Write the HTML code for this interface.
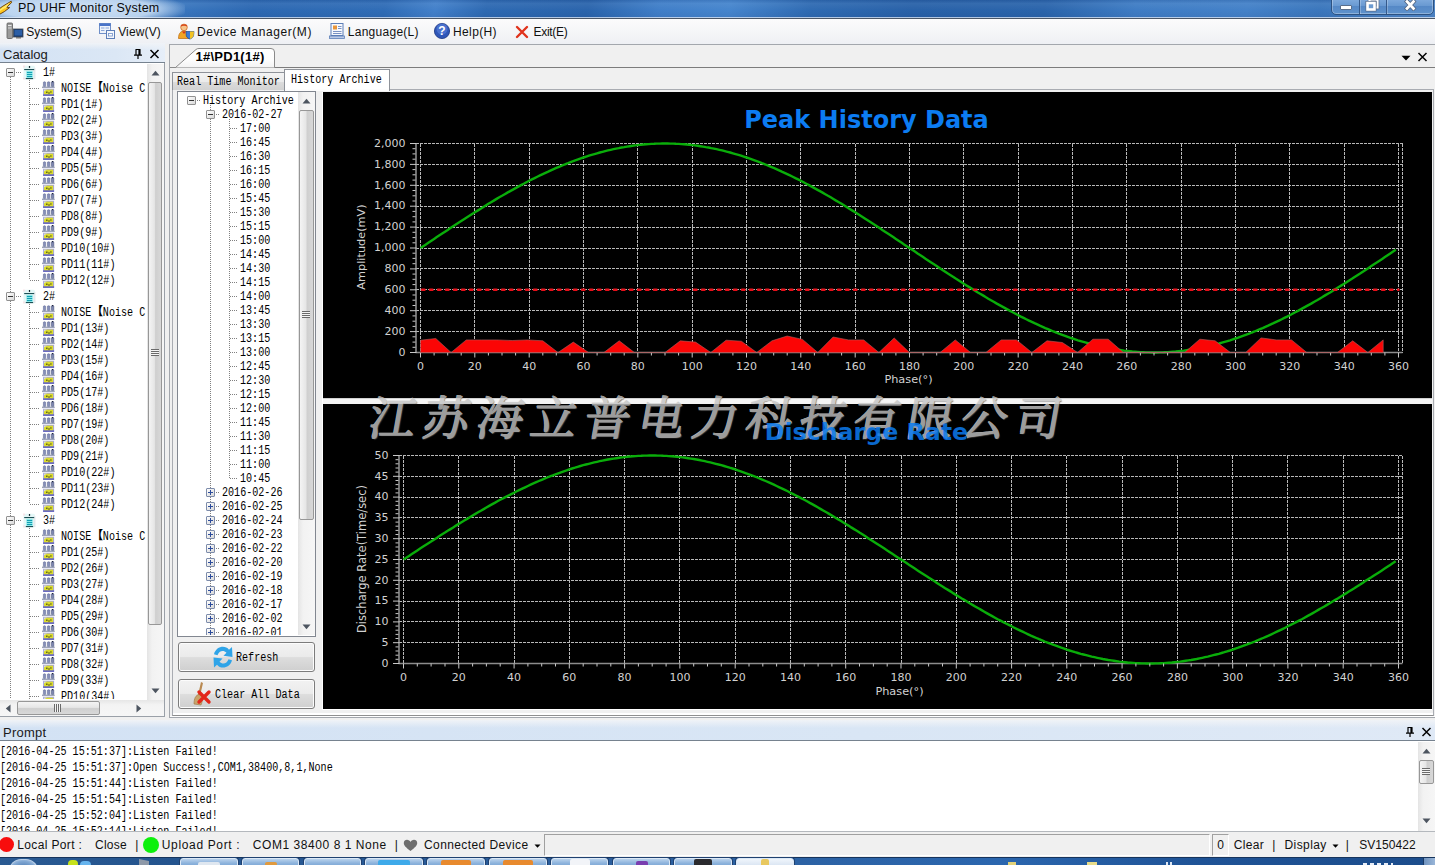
<!DOCTYPE html>
<html><head><meta charset="utf-8"><title>PD UHF Monitor System</title>
<style>
html,body{margin:0;padding:0}
body{width:1435px;height:865px;overflow:hidden;background:#f0f0f0;position:relative;font-family:"Liberation Sans",sans-serif;font-size:12px;color:#000}
.abs,.abs *{position:absolute}
div{box-sizing:border-box}
.ui{font-family:"Liberation Sans",sans-serif;font-size:12px;white-space:nowrap;line-height:14px}
.sim{font-family:"Liberation Mono","Noto Serif CJK SC",monospace;font-size:12px;letter-spacing:0;white-space:pre;line-height:14px;color:#000;transform:scaleX(.84);transform-origin:0 0}
.row{position:absolute;left:0;height:16px;width:147px}
.row .t{position:absolute;top:1.5px}
.hl{position:absolute;height:1px;background-image:linear-gradient(90deg,#808080 50%,transparent 50%);background-size:2px 1px}
.vl{position:absolute;width:1px;background-image:linear-gradient(180deg,#808080 50%,transparent 50%);background-size:1px 2px}
.box{position:absolute;width:9px;height:9px;border:1px solid #919191;background:linear-gradient(135deg,#fff,#d8d8d8);border-radius:1px}
.box:before{content:"";position:absolute;left:1px;top:3px;width:5px;height:1px;background:#333}
.box.plus{border-color:#7d8cab}.box.plus:before{background:#2c4c9c}.box.plus:after{content:"";position:absolute;left:3px;top:1px;width:1px;height:5px;background:#2c4c9c}
.chart text{font-family:"DejaVu Sans","Liberation Sans",sans-serif;font-size:11px;fill:#d2d2d2}
</style></head><body>

<div style="position:absolute;left:0;top:0;width:1435px;height:18px;background:linear-gradient(100deg,#5a90cf 0,#3b78c0 170px,#2c68b2 250px,#2f6cb6 380px,#4280ca 430px,#2d69b2 480px,#2a64ac 580px,#3f7ec8 650px,#4585cd 720px,#2e6ab2 800px,#2861a8 900px,#2a64ab 1030px,#3e7cc4 1120px,#4381c8 1230px,#3a76bc 1300px,#4a82c4 1380px,#4f86c6 1435px)"></div>
<div style="position:absolute;left:0;top:0;width:1435px;height:18px;background:linear-gradient(180deg,rgba(0,0,40,.08),rgba(255,255,255,.06) 20%,rgba(255,255,255,0) 60%,rgba(0,0,40,.06))"></div>
<div style="position:absolute;left:-30px;top:-8px;width:215px;height:34px;background:radial-gradient(ellipse at center,rgba(214,230,247,.95) 0,rgba(205,225,246,.85) 50%,rgba(195,218,243,0) 74%)"></div>
<div style="position:absolute;left:0;top:16.6px;width:1435px;height:1.2px;background:rgba(225,235,248,.75)"></div>
<div style="position:absolute;left:0;top:17.8px;width:1435px;height:1.2px;background:#4a5666"></div>
<svg style="position:absolute;left:0;top:0" width="14" height="16" viewBox="0 0 14 16"><defs><linearGradient id="lg" x1="0" y1="0" x2="1" y2="1"><stop offset="0" stop-color="#ffe03a"/><stop offset=".55" stop-color="#ffc21a"/><stop offset="1" stop-color="#ee7a10"/></linearGradient></defs><path d="M11.2 1.2 L2.2 6.6 L-1 9 L-1 14.6 L4.4 11.6 L9.6 7.6 L6.6 7.2 L11.6 2.6 Z" fill="url(#lg)" stroke="#5e3608" stroke-width=".9" stroke-linejoin="round"/><path d="M9.5 2.8 L2.5 7.4 L0 9.4 L0 11 L4 8.6 L6 8.2 Z" fill="#fff27a" opacity=".8"/></svg>
<div class="ui" style="position:absolute;left:18px;top:1px;font-size:12.5px;letter-spacing:.22px;color:#0a0a0a">PD UHF Monitor System</div>

<div style="position:absolute;left:1331px;top:-4px;width:103px;height:19px;border:1px solid #2d5282;border-radius:0 0 5px 5px;background:linear-gradient(180deg,#86afe0,#6a9ad2 50%,#5588c6 52%,#5f92cc);box-shadow:inset 0 0 0 1px rgba(255,255,255,.3)"></div>
<div style="position:absolute;left:1359px;top:0;width:1px;height:14px;background:#35598a"></div><div style="position:absolute;left:1360px;top:0;width:1px;height:14px;background:rgba(255,255,255,.25)"></div>
<div style="position:absolute;left:1386px;top:0;width:1px;height:14px;background:#35598a"></div><div style="position:absolute;left:1387px;top:0;width:1px;height:14px;background:rgba(255,255,255,.25)"></div>
<div style="position:absolute;left:1340px;top:5px;width:12px;height:5px;background:#fff;border:1px solid #5a6e8a;border-radius:1px"></div>
<svg style="position:absolute;left:1364px;top:-2px" width="16" height="14" viewBox="0 0 16 14"><rect x="5.5" y="1.5" width="8" height="8" fill="none" stroke="#566a88" stroke-width="3.6"/><rect x="5.5" y="1.5" width="8" height="8" fill="none" stroke="#fff" stroke-width="2.2"/><rect x="3.5" y="5" width="7" height="6.5" fill="#5d8fc8" stroke="#566a88" stroke-width="4"/><rect x="3.5" y="5" width="7" height="6.5" fill="#6d9bd0" stroke="#fff" stroke-width="2.6"/></svg>
<svg style="position:absolute;left:1403px;top:-1px" width="15" height="12" viewBox="0 0 15 12"><path d="M4 2.5 L10.5 9.5 M10.5 2.5 L4 9.5" stroke="#50627e" stroke-width="4.2" stroke-linecap="square"/><path d="M4 2.5 L10.5 9.5 M10.5 2.5 L4 9.5" stroke="#fff" stroke-width="2.7" stroke-linecap="square"/></svg>

<div style="position:absolute;left:0;top:19px;width:1435px;height:25px;background:linear-gradient(180deg,#fbfbfc,#f4f5f7 60%,#eef0f4)"></div>


<div class="ui" style="position:absolute;left:26.3px;top:24.8px;letter-spacing:-0.057px;color:#111">System(S)</div>
<div class="ui" style="position:absolute;left:118.2px;top:24.8px;letter-spacing:0.143px;color:#111">View(V)</div>
<div class="ui" style="position:absolute;left:197px;top:24.8px;letter-spacing:0.566px;color:#111">Device Manager(M)</div>
<div class="ui" style="position:absolute;left:347.8px;top:24.8px;letter-spacing:0.267px;color:#111">Language(L)</div>
<div class="ui" style="position:absolute;left:453px;top:24.8px;letter-spacing:0.379px;color:#111">Help(H)</div>
<div class="ui" style="position:absolute;left:533.4px;top:24.8px;letter-spacing:-0.257px;color:#111">Exit(E)</div>
<svg style="position:absolute;left:6px;top:22px" width="18" height="18" viewBox="0 0 18 18"><rect x="1" y="1" width="5.5" height="15.5" rx="1" fill="#9a9a9a" stroke="#5a5a5a" stroke-width=".8"/><rect x="2" y="3" width="3.5" height="1" fill="#e8e8e8"/><rect x="2" y="5.5" width="3.5" height="1" fill="#d8d8d8"/><rect x="7.5" y="7" width="9.5" height="8" fill="#16386c" stroke="#404a58" stroke-width=".8"/><rect x="8.5" y="8" width="7.5" height="5.5" fill="#2b5ea6"/><rect x="10" y="15" width="5" height="1.5" fill="#777"/></svg>
<svg style="position:absolute;left:98px;top:22px" width="18" height="18" viewBox="0 0 18 18"><rect x="1.5" y="1.5" width="11" height="10" fill="#eef3fb" stroke="#6f8fc8"/><rect x="1.5" y="1.5" width="11" height="2.5" fill="#4a74c8"/><rect x="3" y="5.5" width="3.5" height="1" fill="#8aa6d8"/><rect x="7.5" y="5.5" width="3.5" height="1" fill="#8aa6d8"/><rect x="3" y="8" width="3.5" height="1" fill="#8aa6d8"/><rect x="8.5" y="8.5" width="8" height="8" fill="#f4f7fc" stroke="#5d7fb8"/><rect x="10.5" y="11.5" width="4" height="2.5" fill="#fff" stroke="#6f8fc8" stroke-width=".8"/></svg>
<svg style="position:absolute;left:177px;top:22px" width="18" height="18" viewBox="0 0 18 18"><circle cx="7" cy="5.4" r="3.3" fill="#f6c48a" stroke="#c8641c" stroke-width=".7"/><path d="M3.6 4.6 C3.6 1.6 10.4 1.6 10.4 4.6 C8.5 3.4 5.5 3.4 3.6 4.6Z" fill="#d8481c"/><path d="M1.5 16.5 C1.5 11 4 9 7 9 C10 9 12.5 11 12.5 16.5Z" fill="#f2a424" stroke="#b8680e" stroke-width=".7"/><path d="M5 9.4 L7 12 L9 9.4Z" fill="#d8361c"/><path d="M9 9.5 L17 9.5 L16.5 14 C15.5 16 13.5 16.8 13 17 C12.2 16.8 10 16 9.3 14Z" fill="#3b7bd6" stroke="#1d4a94" stroke-width=".7"/><path d="M13 9.5 L17 9.5 L16.5 14 C15.5 16 13.5 16.8 13 17Z" fill="#f3c324"/></svg>
<svg style="position:absolute;left:328px;top:22px" width="18" height="18" viewBox="0 0 18 18"><rect x="3" y="1.5" width="12" height="12" fill="#f7f9fd" stroke="#5d7fb8"/><rect x="5" y="3.5" width="4" height="4" fill="#e8953a"/><rect x="10" y="4" width="3.5" height="1" fill="#7a93c4"/><rect x="10" y="6" width="3.5" height="1" fill="#7a93c4"/><rect x="5" y="9" width="8.5" height="1" fill="#7a93c4"/><rect x="5" y="11" width="8.5" height="1" fill="#7a93c4"/><rect x="1.5" y="14" width="15" height="2.5" fill="#b9c9e6" stroke="#5d7fb8" stroke-width=".8"/></svg>
<svg style="position:absolute;left:433px;top:22px" width="18" height="18" viewBox="0 0 18 18"><circle cx="9" cy="9" r="7.6" fill="#2f56b8" stroke="#1b3580" stroke-width=".8"/><circle cx="9" cy="7" r="5.5" fill="#5f86e0" opacity=".55"/><text x="9" y="13.2" text-anchor="middle" font-family="Liberation Sans,sans-serif" font-weight="bold" font-size="12" fill="#fff">?</text></svg>
<svg style="position:absolute;left:515px;top:25px" width="14" height="14" viewBox="0 0 14 14"><path d="M2 2 L12 12 M12 2 L2 12" stroke="#e0331c" stroke-width="2.4" stroke-linecap="round"/></svg>

<div style="position:absolute;left:0;top:43px;width:165px;height:20px;background:linear-gradient(180deg,rgba(240,243,247,1) 0,rgba(240,243,247,0) 35%),linear-gradient(90deg,#d3e2f4,#dbe7f5 70%,#e6eef8);border-bottom:1px solid #76828f"></div>
<div class="ui" style="position:absolute;left:3px;top:47.8px;font-size:13px;color:#1a1a1a">Catalog</div>
<svg style="position:absolute;left:133px;top:48px" width="10" height="12" viewBox="0 0 10 12"><path d="M2.5 1.5 H7.5 M3 1.5 V7 M7 1.5 V7 M6 1.5 V7 M1 7.2 H9 M5 7.5 V11" stroke="#000" stroke-width="1.2" fill="none"/></svg>
<svg style="position:absolute;left:149px;top:49px" width="11" height="10" viewBox="0 0 11 10"><path d="M1.5 1 L9.5 9 M9.5 1 L1.5 9" stroke="#000" stroke-width="1.5"/></svg>
<div style="position:absolute;left:0;top:63px;width:165px;height:654px;background:#fff;border-right:1px solid #9aa0a8;border-bottom:1px solid #9aa0a8"></div>

<div id="cat" style="position:absolute;left:0;top:64px;width:147px;height:635px;overflow:hidden">
<div class="vl" style="left:10px;top:13px;height:640px"></div>
<div class="row" style="top:0px"><div class="box" style="left:6px;top:4px"></div><div class="hl" style="left:16px;top:8px;width:6px"></div><svg style="position:absolute;left:23px;top:1px" width="13" height="15" viewBox="0 0 13 15"><rect x="0.5" y="0.8" width="11.5" height="13.6" rx="1.5" fill="#e4f7f7"/><rect x="0" y="0.5" width="2" height="2" fill="#f9dde4" opacity=".8"/><rect x="0" y="12.5" width="2" height="2" fill="#f9dde4" opacity=".8"/><rect x="10.5" y="3" width="2" height="11" fill="#e3e6ea" opacity=".8"/><rect x="5.9" y="1" width="1.2" height="1.9" fill="#10222a"/><rect x="1.2" y="4" width="10" height="1.1" fill="#1d4f55"/><rect x="3.4" y="5.8" width="6.2" height="7.2" fill="#8ceaea"/><rect x="3.9" y="7" width="5.3" height="1" fill="#149eb2"/><rect x="3.9" y="9" width="5.3" height="1" fill="#149eb2"/><rect x="3.9" y="11" width="5.3" height="1" fill="#149eb2"/><rect x="2.8" y="13" width="7.3" height="1.1" fill="#1d4f55"/></svg><span class="sim t" style="left:42.5px">1#</span></div>
<div class="vl" style="left:29px;top:16px;height:200px"></div>
<div class="row" style="top:16px"><div class="hl" style="left:30px;top:8px;width:10px"></div><svg style="position:absolute;left:42px;top:1px" width="13" height="15" viewBox="0 0 13 15"><rect x="1.4" y="0.8" width="2.2" height="4.9" rx=".8" fill="#8590ba" stroke="#59618e" stroke-width=".5"/><rect x="5.4" y="0.8" width="2.4" height="4.9" rx=".8" fill="#8590ba" stroke="#59618e" stroke-width=".5"/><rect x="9.4" y="0.6" width="2.4" height="5.1" rx=".8" fill="#7d87b0" stroke="#3f4670" stroke-width=".5"/><rect x="10" y="0" width="1.2" height="1.2" fill="#20243a"/><rect x="0" y="5.6" width="12.7" height="1.3" fill="#8b93ad"/><rect x="0.6" y="6.9" width="11.6" height="1.2" fill="#e6e6f4"/><rect x="1.1" y="8" width="11" height="6.8" fill="#a3a3e4"/><rect x="2" y="8.6" width="9.2" height="5" fill="#dcdc30"/><path d="M2 8.6 L5 8.6 L2 10.6Z" fill="#d6d8e0"/><rect x="1.1" y="13.4" width="11" height="1.4" fill="#5a5ab8"/><rect x="4.2" y="10.6" width="1.3" height="1.2" fill="#2a3010"/><rect x="6.4" y="11.4" width="1.2" height="1.2" fill="#2a3010"/><rect x="8.3" y="10.4" width="1.2" height="1.2" fill="#3a4216"/></svg><span class="sim t" style="left:60.5px">NOISE<span style="font-family:'Noto Sans CJK SC',sans-serif;font-weight:700;font-size:12px;line-height:0;letter-spacing:0;display:inline-block;transform:scaleX(1.19);transform-origin:0 50%;margin-left:-0.5px;margin-right:2.3px">【</span>Noise C:</span></div>
<div class="row" style="top:32px"><div class="hl" style="left:30px;top:8px;width:10px"></div><svg style="position:absolute;left:42px;top:1px" width="13" height="15" viewBox="0 0 13 15"><rect x="1.4" y="0.8" width="2.2" height="4.9" rx=".8" fill="#8590ba" stroke="#59618e" stroke-width=".5"/><rect x="5.4" y="0.8" width="2.4" height="4.9" rx=".8" fill="#8590ba" stroke="#59618e" stroke-width=".5"/><rect x="9.4" y="0.6" width="2.4" height="5.1" rx=".8" fill="#7d87b0" stroke="#3f4670" stroke-width=".5"/><rect x="10" y="0" width="1.2" height="1.2" fill="#20243a"/><rect x="0" y="5.6" width="12.7" height="1.3" fill="#8b93ad"/><rect x="0.6" y="6.9" width="11.6" height="1.2" fill="#e6e6f4"/><rect x="1.1" y="8" width="11" height="6.8" fill="#a3a3e4"/><rect x="2" y="8.6" width="9.2" height="5" fill="#dcdc30"/><path d="M2 8.6 L5 8.6 L2 10.6Z" fill="#d6d8e0"/><rect x="1.1" y="13.4" width="11" height="1.4" fill="#5a5ab8"/><rect x="4.2" y="10.6" width="1.3" height="1.2" fill="#2a3010"/><rect x="6.4" y="11.4" width="1.2" height="1.2" fill="#2a3010"/><rect x="8.3" y="10.4" width="1.2" height="1.2" fill="#3a4216"/></svg><span class="sim t" style="left:60.5px">PD1(1#)</span></div>
<div class="row" style="top:48px"><div class="hl" style="left:30px;top:8px;width:10px"></div><svg style="position:absolute;left:42px;top:1px" width="13" height="15" viewBox="0 0 13 15"><rect x="1.4" y="0.8" width="2.2" height="4.9" rx=".8" fill="#8590ba" stroke="#59618e" stroke-width=".5"/><rect x="5.4" y="0.8" width="2.4" height="4.9" rx=".8" fill="#8590ba" stroke="#59618e" stroke-width=".5"/><rect x="9.4" y="0.6" width="2.4" height="5.1" rx=".8" fill="#7d87b0" stroke="#3f4670" stroke-width=".5"/><rect x="10" y="0" width="1.2" height="1.2" fill="#20243a"/><rect x="0" y="5.6" width="12.7" height="1.3" fill="#8b93ad"/><rect x="0.6" y="6.9" width="11.6" height="1.2" fill="#e6e6f4"/><rect x="1.1" y="8" width="11" height="6.8" fill="#a3a3e4"/><rect x="2" y="8.6" width="9.2" height="5" fill="#dcdc30"/><path d="M2 8.6 L5 8.6 L2 10.6Z" fill="#d6d8e0"/><rect x="1.1" y="13.4" width="11" height="1.4" fill="#5a5ab8"/><rect x="4.2" y="10.6" width="1.3" height="1.2" fill="#2a3010"/><rect x="6.4" y="11.4" width="1.2" height="1.2" fill="#2a3010"/><rect x="8.3" y="10.4" width="1.2" height="1.2" fill="#3a4216"/></svg><span class="sim t" style="left:60.5px">PD2(2#)</span></div>
<div class="row" style="top:64px"><div class="hl" style="left:30px;top:8px;width:10px"></div><svg style="position:absolute;left:42px;top:1px" width="13" height="15" viewBox="0 0 13 15"><rect x="1.4" y="0.8" width="2.2" height="4.9" rx=".8" fill="#8590ba" stroke="#59618e" stroke-width=".5"/><rect x="5.4" y="0.8" width="2.4" height="4.9" rx=".8" fill="#8590ba" stroke="#59618e" stroke-width=".5"/><rect x="9.4" y="0.6" width="2.4" height="5.1" rx=".8" fill="#7d87b0" stroke="#3f4670" stroke-width=".5"/><rect x="10" y="0" width="1.2" height="1.2" fill="#20243a"/><rect x="0" y="5.6" width="12.7" height="1.3" fill="#8b93ad"/><rect x="0.6" y="6.9" width="11.6" height="1.2" fill="#e6e6f4"/><rect x="1.1" y="8" width="11" height="6.8" fill="#a3a3e4"/><rect x="2" y="8.6" width="9.2" height="5" fill="#dcdc30"/><path d="M2 8.6 L5 8.6 L2 10.6Z" fill="#d6d8e0"/><rect x="1.1" y="13.4" width="11" height="1.4" fill="#5a5ab8"/><rect x="4.2" y="10.6" width="1.3" height="1.2" fill="#2a3010"/><rect x="6.4" y="11.4" width="1.2" height="1.2" fill="#2a3010"/><rect x="8.3" y="10.4" width="1.2" height="1.2" fill="#3a4216"/></svg><span class="sim t" style="left:60.5px">PD3(3#)</span></div>
<div class="row" style="top:80px"><div class="hl" style="left:30px;top:8px;width:10px"></div><svg style="position:absolute;left:42px;top:1px" width="13" height="15" viewBox="0 0 13 15"><rect x="1.4" y="0.8" width="2.2" height="4.9" rx=".8" fill="#8590ba" stroke="#59618e" stroke-width=".5"/><rect x="5.4" y="0.8" width="2.4" height="4.9" rx=".8" fill="#8590ba" stroke="#59618e" stroke-width=".5"/><rect x="9.4" y="0.6" width="2.4" height="5.1" rx=".8" fill="#7d87b0" stroke="#3f4670" stroke-width=".5"/><rect x="10" y="0" width="1.2" height="1.2" fill="#20243a"/><rect x="0" y="5.6" width="12.7" height="1.3" fill="#8b93ad"/><rect x="0.6" y="6.9" width="11.6" height="1.2" fill="#e6e6f4"/><rect x="1.1" y="8" width="11" height="6.8" fill="#a3a3e4"/><rect x="2" y="8.6" width="9.2" height="5" fill="#dcdc30"/><path d="M2 8.6 L5 8.6 L2 10.6Z" fill="#d6d8e0"/><rect x="1.1" y="13.4" width="11" height="1.4" fill="#5a5ab8"/><rect x="4.2" y="10.6" width="1.3" height="1.2" fill="#2a3010"/><rect x="6.4" y="11.4" width="1.2" height="1.2" fill="#2a3010"/><rect x="8.3" y="10.4" width="1.2" height="1.2" fill="#3a4216"/></svg><span class="sim t" style="left:60.5px">PD4(4#)</span></div>
<div class="row" style="top:96px"><div class="hl" style="left:30px;top:8px;width:10px"></div><svg style="position:absolute;left:42px;top:1px" width="13" height="15" viewBox="0 0 13 15"><rect x="1.4" y="0.8" width="2.2" height="4.9" rx=".8" fill="#8590ba" stroke="#59618e" stroke-width=".5"/><rect x="5.4" y="0.8" width="2.4" height="4.9" rx=".8" fill="#8590ba" stroke="#59618e" stroke-width=".5"/><rect x="9.4" y="0.6" width="2.4" height="5.1" rx=".8" fill="#7d87b0" stroke="#3f4670" stroke-width=".5"/><rect x="10" y="0" width="1.2" height="1.2" fill="#20243a"/><rect x="0" y="5.6" width="12.7" height="1.3" fill="#8b93ad"/><rect x="0.6" y="6.9" width="11.6" height="1.2" fill="#e6e6f4"/><rect x="1.1" y="8" width="11" height="6.8" fill="#a3a3e4"/><rect x="2" y="8.6" width="9.2" height="5" fill="#dcdc30"/><path d="M2 8.6 L5 8.6 L2 10.6Z" fill="#d6d8e0"/><rect x="1.1" y="13.4" width="11" height="1.4" fill="#5a5ab8"/><rect x="4.2" y="10.6" width="1.3" height="1.2" fill="#2a3010"/><rect x="6.4" y="11.4" width="1.2" height="1.2" fill="#2a3010"/><rect x="8.3" y="10.4" width="1.2" height="1.2" fill="#3a4216"/></svg><span class="sim t" style="left:60.5px">PD5(5#)</span></div>
<div class="row" style="top:112px"><div class="hl" style="left:30px;top:8px;width:10px"></div><svg style="position:absolute;left:42px;top:1px" width="13" height="15" viewBox="0 0 13 15"><rect x="1.4" y="0.8" width="2.2" height="4.9" rx=".8" fill="#8590ba" stroke="#59618e" stroke-width=".5"/><rect x="5.4" y="0.8" width="2.4" height="4.9" rx=".8" fill="#8590ba" stroke="#59618e" stroke-width=".5"/><rect x="9.4" y="0.6" width="2.4" height="5.1" rx=".8" fill="#7d87b0" stroke="#3f4670" stroke-width=".5"/><rect x="10" y="0" width="1.2" height="1.2" fill="#20243a"/><rect x="0" y="5.6" width="12.7" height="1.3" fill="#8b93ad"/><rect x="0.6" y="6.9" width="11.6" height="1.2" fill="#e6e6f4"/><rect x="1.1" y="8" width="11" height="6.8" fill="#a3a3e4"/><rect x="2" y="8.6" width="9.2" height="5" fill="#dcdc30"/><path d="M2 8.6 L5 8.6 L2 10.6Z" fill="#d6d8e0"/><rect x="1.1" y="13.4" width="11" height="1.4" fill="#5a5ab8"/><rect x="4.2" y="10.6" width="1.3" height="1.2" fill="#2a3010"/><rect x="6.4" y="11.4" width="1.2" height="1.2" fill="#2a3010"/><rect x="8.3" y="10.4" width="1.2" height="1.2" fill="#3a4216"/></svg><span class="sim t" style="left:60.5px">PD6(6#)</span></div>
<div class="row" style="top:128px"><div class="hl" style="left:30px;top:8px;width:10px"></div><svg style="position:absolute;left:42px;top:1px" width="13" height="15" viewBox="0 0 13 15"><rect x="1.4" y="0.8" width="2.2" height="4.9" rx=".8" fill="#8590ba" stroke="#59618e" stroke-width=".5"/><rect x="5.4" y="0.8" width="2.4" height="4.9" rx=".8" fill="#8590ba" stroke="#59618e" stroke-width=".5"/><rect x="9.4" y="0.6" width="2.4" height="5.1" rx=".8" fill="#7d87b0" stroke="#3f4670" stroke-width=".5"/><rect x="10" y="0" width="1.2" height="1.2" fill="#20243a"/><rect x="0" y="5.6" width="12.7" height="1.3" fill="#8b93ad"/><rect x="0.6" y="6.9" width="11.6" height="1.2" fill="#e6e6f4"/><rect x="1.1" y="8" width="11" height="6.8" fill="#a3a3e4"/><rect x="2" y="8.6" width="9.2" height="5" fill="#dcdc30"/><path d="M2 8.6 L5 8.6 L2 10.6Z" fill="#d6d8e0"/><rect x="1.1" y="13.4" width="11" height="1.4" fill="#5a5ab8"/><rect x="4.2" y="10.6" width="1.3" height="1.2" fill="#2a3010"/><rect x="6.4" y="11.4" width="1.2" height="1.2" fill="#2a3010"/><rect x="8.3" y="10.4" width="1.2" height="1.2" fill="#3a4216"/></svg><span class="sim t" style="left:60.5px">PD7(7#)</span></div>
<div class="row" style="top:144px"><div class="hl" style="left:30px;top:8px;width:10px"></div><svg style="position:absolute;left:42px;top:1px" width="13" height="15" viewBox="0 0 13 15"><rect x="1.4" y="0.8" width="2.2" height="4.9" rx=".8" fill="#8590ba" stroke="#59618e" stroke-width=".5"/><rect x="5.4" y="0.8" width="2.4" height="4.9" rx=".8" fill="#8590ba" stroke="#59618e" stroke-width=".5"/><rect x="9.4" y="0.6" width="2.4" height="5.1" rx=".8" fill="#7d87b0" stroke="#3f4670" stroke-width=".5"/><rect x="10" y="0" width="1.2" height="1.2" fill="#20243a"/><rect x="0" y="5.6" width="12.7" height="1.3" fill="#8b93ad"/><rect x="0.6" y="6.9" width="11.6" height="1.2" fill="#e6e6f4"/><rect x="1.1" y="8" width="11" height="6.8" fill="#a3a3e4"/><rect x="2" y="8.6" width="9.2" height="5" fill="#dcdc30"/><path d="M2 8.6 L5 8.6 L2 10.6Z" fill="#d6d8e0"/><rect x="1.1" y="13.4" width="11" height="1.4" fill="#5a5ab8"/><rect x="4.2" y="10.6" width="1.3" height="1.2" fill="#2a3010"/><rect x="6.4" y="11.4" width="1.2" height="1.2" fill="#2a3010"/><rect x="8.3" y="10.4" width="1.2" height="1.2" fill="#3a4216"/></svg><span class="sim t" style="left:60.5px">PD8(8#)</span></div>
<div class="row" style="top:160px"><div class="hl" style="left:30px;top:8px;width:10px"></div><svg style="position:absolute;left:42px;top:1px" width="13" height="15" viewBox="0 0 13 15"><rect x="1.4" y="0.8" width="2.2" height="4.9" rx=".8" fill="#8590ba" stroke="#59618e" stroke-width=".5"/><rect x="5.4" y="0.8" width="2.4" height="4.9" rx=".8" fill="#8590ba" stroke="#59618e" stroke-width=".5"/><rect x="9.4" y="0.6" width="2.4" height="5.1" rx=".8" fill="#7d87b0" stroke="#3f4670" stroke-width=".5"/><rect x="10" y="0" width="1.2" height="1.2" fill="#20243a"/><rect x="0" y="5.6" width="12.7" height="1.3" fill="#8b93ad"/><rect x="0.6" y="6.9" width="11.6" height="1.2" fill="#e6e6f4"/><rect x="1.1" y="8" width="11" height="6.8" fill="#a3a3e4"/><rect x="2" y="8.6" width="9.2" height="5" fill="#dcdc30"/><path d="M2 8.6 L5 8.6 L2 10.6Z" fill="#d6d8e0"/><rect x="1.1" y="13.4" width="11" height="1.4" fill="#5a5ab8"/><rect x="4.2" y="10.6" width="1.3" height="1.2" fill="#2a3010"/><rect x="6.4" y="11.4" width="1.2" height="1.2" fill="#2a3010"/><rect x="8.3" y="10.4" width="1.2" height="1.2" fill="#3a4216"/></svg><span class="sim t" style="left:60.5px">PD9(9#)</span></div>
<div class="row" style="top:176px"><div class="hl" style="left:30px;top:8px;width:10px"></div><svg style="position:absolute;left:42px;top:1px" width="13" height="15" viewBox="0 0 13 15"><rect x="1.4" y="0.8" width="2.2" height="4.9" rx=".8" fill="#8590ba" stroke="#59618e" stroke-width=".5"/><rect x="5.4" y="0.8" width="2.4" height="4.9" rx=".8" fill="#8590ba" stroke="#59618e" stroke-width=".5"/><rect x="9.4" y="0.6" width="2.4" height="5.1" rx=".8" fill="#7d87b0" stroke="#3f4670" stroke-width=".5"/><rect x="10" y="0" width="1.2" height="1.2" fill="#20243a"/><rect x="0" y="5.6" width="12.7" height="1.3" fill="#8b93ad"/><rect x="0.6" y="6.9" width="11.6" height="1.2" fill="#e6e6f4"/><rect x="1.1" y="8" width="11" height="6.8" fill="#a3a3e4"/><rect x="2" y="8.6" width="9.2" height="5" fill="#dcdc30"/><path d="M2 8.6 L5 8.6 L2 10.6Z" fill="#d6d8e0"/><rect x="1.1" y="13.4" width="11" height="1.4" fill="#5a5ab8"/><rect x="4.2" y="10.6" width="1.3" height="1.2" fill="#2a3010"/><rect x="6.4" y="11.4" width="1.2" height="1.2" fill="#2a3010"/><rect x="8.3" y="10.4" width="1.2" height="1.2" fill="#3a4216"/></svg><span class="sim t" style="left:60.5px">PD10(10#)</span></div>
<div class="row" style="top:192px"><div class="hl" style="left:30px;top:8px;width:10px"></div><svg style="position:absolute;left:42px;top:1px" width="13" height="15" viewBox="0 0 13 15"><rect x="1.4" y="0.8" width="2.2" height="4.9" rx=".8" fill="#8590ba" stroke="#59618e" stroke-width=".5"/><rect x="5.4" y="0.8" width="2.4" height="4.9" rx=".8" fill="#8590ba" stroke="#59618e" stroke-width=".5"/><rect x="9.4" y="0.6" width="2.4" height="5.1" rx=".8" fill="#7d87b0" stroke="#3f4670" stroke-width=".5"/><rect x="10" y="0" width="1.2" height="1.2" fill="#20243a"/><rect x="0" y="5.6" width="12.7" height="1.3" fill="#8b93ad"/><rect x="0.6" y="6.9" width="11.6" height="1.2" fill="#e6e6f4"/><rect x="1.1" y="8" width="11" height="6.8" fill="#a3a3e4"/><rect x="2" y="8.6" width="9.2" height="5" fill="#dcdc30"/><path d="M2 8.6 L5 8.6 L2 10.6Z" fill="#d6d8e0"/><rect x="1.1" y="13.4" width="11" height="1.4" fill="#5a5ab8"/><rect x="4.2" y="10.6" width="1.3" height="1.2" fill="#2a3010"/><rect x="6.4" y="11.4" width="1.2" height="1.2" fill="#2a3010"/><rect x="8.3" y="10.4" width="1.2" height="1.2" fill="#3a4216"/></svg><span class="sim t" style="left:60.5px">PD11(11#)</span></div>
<div class="row" style="top:208px"><div class="hl" style="left:30px;top:8px;width:10px"></div><svg style="position:absolute;left:42px;top:1px" width="13" height="15" viewBox="0 0 13 15"><rect x="1.4" y="0.8" width="2.2" height="4.9" rx=".8" fill="#8590ba" stroke="#59618e" stroke-width=".5"/><rect x="5.4" y="0.8" width="2.4" height="4.9" rx=".8" fill="#8590ba" stroke="#59618e" stroke-width=".5"/><rect x="9.4" y="0.6" width="2.4" height="5.1" rx=".8" fill="#7d87b0" stroke="#3f4670" stroke-width=".5"/><rect x="10" y="0" width="1.2" height="1.2" fill="#20243a"/><rect x="0" y="5.6" width="12.7" height="1.3" fill="#8b93ad"/><rect x="0.6" y="6.9" width="11.6" height="1.2" fill="#e6e6f4"/><rect x="1.1" y="8" width="11" height="6.8" fill="#a3a3e4"/><rect x="2" y="8.6" width="9.2" height="5" fill="#dcdc30"/><path d="M2 8.6 L5 8.6 L2 10.6Z" fill="#d6d8e0"/><rect x="1.1" y="13.4" width="11" height="1.4" fill="#5a5ab8"/><rect x="4.2" y="10.6" width="1.3" height="1.2" fill="#2a3010"/><rect x="6.4" y="11.4" width="1.2" height="1.2" fill="#2a3010"/><rect x="8.3" y="10.4" width="1.2" height="1.2" fill="#3a4216"/></svg><span class="sim t" style="left:60.5px">PD12(12#)</span></div>
<div class="row" style="top:224px"><div class="box" style="left:6px;top:4px"></div><div class="hl" style="left:16px;top:8px;width:6px"></div><svg style="position:absolute;left:23px;top:1px" width="13" height="15" viewBox="0 0 13 15"><rect x="0.5" y="0.8" width="11.5" height="13.6" rx="1.5" fill="#e4f7f7"/><rect x="0" y="0.5" width="2" height="2" fill="#f9dde4" opacity=".8"/><rect x="0" y="12.5" width="2" height="2" fill="#f9dde4" opacity=".8"/><rect x="10.5" y="3" width="2" height="11" fill="#e3e6ea" opacity=".8"/><rect x="5.9" y="1" width="1.2" height="1.9" fill="#10222a"/><rect x="1.2" y="4" width="10" height="1.1" fill="#1d4f55"/><rect x="3.4" y="5.8" width="6.2" height="7.2" fill="#8ceaea"/><rect x="3.9" y="7" width="5.3" height="1" fill="#149eb2"/><rect x="3.9" y="9" width="5.3" height="1" fill="#149eb2"/><rect x="3.9" y="11" width="5.3" height="1" fill="#149eb2"/><rect x="2.8" y="13" width="7.3" height="1.1" fill="#1d4f55"/></svg><span class="sim t" style="left:42.5px">2#</span></div>
<div class="vl" style="left:29px;top:240px;height:200px"></div>
<div class="row" style="top:240px"><div class="hl" style="left:30px;top:8px;width:10px"></div><svg style="position:absolute;left:42px;top:1px" width="13" height="15" viewBox="0 0 13 15"><rect x="1.4" y="0.8" width="2.2" height="4.9" rx=".8" fill="#8590ba" stroke="#59618e" stroke-width=".5"/><rect x="5.4" y="0.8" width="2.4" height="4.9" rx=".8" fill="#8590ba" stroke="#59618e" stroke-width=".5"/><rect x="9.4" y="0.6" width="2.4" height="5.1" rx=".8" fill="#7d87b0" stroke="#3f4670" stroke-width=".5"/><rect x="10" y="0" width="1.2" height="1.2" fill="#20243a"/><rect x="0" y="5.6" width="12.7" height="1.3" fill="#8b93ad"/><rect x="0.6" y="6.9" width="11.6" height="1.2" fill="#e6e6f4"/><rect x="1.1" y="8" width="11" height="6.8" fill="#a3a3e4"/><rect x="2" y="8.6" width="9.2" height="5" fill="#dcdc30"/><path d="M2 8.6 L5 8.6 L2 10.6Z" fill="#d6d8e0"/><rect x="1.1" y="13.4" width="11" height="1.4" fill="#5a5ab8"/><rect x="4.2" y="10.6" width="1.3" height="1.2" fill="#2a3010"/><rect x="6.4" y="11.4" width="1.2" height="1.2" fill="#2a3010"/><rect x="8.3" y="10.4" width="1.2" height="1.2" fill="#3a4216"/></svg><span class="sim t" style="left:60.5px">NOISE<span style="font-family:'Noto Sans CJK SC',sans-serif;font-weight:700;font-size:12px;line-height:0;letter-spacing:0;display:inline-block;transform:scaleX(1.19);transform-origin:0 50%;margin-left:-0.5px;margin-right:2.3px">【</span>Noise C:</span></div>
<div class="row" style="top:256px"><div class="hl" style="left:30px;top:8px;width:10px"></div><svg style="position:absolute;left:42px;top:1px" width="13" height="15" viewBox="0 0 13 15"><rect x="1.4" y="0.8" width="2.2" height="4.9" rx=".8" fill="#8590ba" stroke="#59618e" stroke-width=".5"/><rect x="5.4" y="0.8" width="2.4" height="4.9" rx=".8" fill="#8590ba" stroke="#59618e" stroke-width=".5"/><rect x="9.4" y="0.6" width="2.4" height="5.1" rx=".8" fill="#7d87b0" stroke="#3f4670" stroke-width=".5"/><rect x="10" y="0" width="1.2" height="1.2" fill="#20243a"/><rect x="0" y="5.6" width="12.7" height="1.3" fill="#8b93ad"/><rect x="0.6" y="6.9" width="11.6" height="1.2" fill="#e6e6f4"/><rect x="1.1" y="8" width="11" height="6.8" fill="#a3a3e4"/><rect x="2" y="8.6" width="9.2" height="5" fill="#dcdc30"/><path d="M2 8.6 L5 8.6 L2 10.6Z" fill="#d6d8e0"/><rect x="1.1" y="13.4" width="11" height="1.4" fill="#5a5ab8"/><rect x="4.2" y="10.6" width="1.3" height="1.2" fill="#2a3010"/><rect x="6.4" y="11.4" width="1.2" height="1.2" fill="#2a3010"/><rect x="8.3" y="10.4" width="1.2" height="1.2" fill="#3a4216"/></svg><span class="sim t" style="left:60.5px">PD1(13#)</span></div>
<div class="row" style="top:272px"><div class="hl" style="left:30px;top:8px;width:10px"></div><svg style="position:absolute;left:42px;top:1px" width="13" height="15" viewBox="0 0 13 15"><rect x="1.4" y="0.8" width="2.2" height="4.9" rx=".8" fill="#8590ba" stroke="#59618e" stroke-width=".5"/><rect x="5.4" y="0.8" width="2.4" height="4.9" rx=".8" fill="#8590ba" stroke="#59618e" stroke-width=".5"/><rect x="9.4" y="0.6" width="2.4" height="5.1" rx=".8" fill="#7d87b0" stroke="#3f4670" stroke-width=".5"/><rect x="10" y="0" width="1.2" height="1.2" fill="#20243a"/><rect x="0" y="5.6" width="12.7" height="1.3" fill="#8b93ad"/><rect x="0.6" y="6.9" width="11.6" height="1.2" fill="#e6e6f4"/><rect x="1.1" y="8" width="11" height="6.8" fill="#a3a3e4"/><rect x="2" y="8.6" width="9.2" height="5" fill="#dcdc30"/><path d="M2 8.6 L5 8.6 L2 10.6Z" fill="#d6d8e0"/><rect x="1.1" y="13.4" width="11" height="1.4" fill="#5a5ab8"/><rect x="4.2" y="10.6" width="1.3" height="1.2" fill="#2a3010"/><rect x="6.4" y="11.4" width="1.2" height="1.2" fill="#2a3010"/><rect x="8.3" y="10.4" width="1.2" height="1.2" fill="#3a4216"/></svg><span class="sim t" style="left:60.5px">PD2(14#)</span></div>
<div class="row" style="top:288px"><div class="hl" style="left:30px;top:8px;width:10px"></div><svg style="position:absolute;left:42px;top:1px" width="13" height="15" viewBox="0 0 13 15"><rect x="1.4" y="0.8" width="2.2" height="4.9" rx=".8" fill="#8590ba" stroke="#59618e" stroke-width=".5"/><rect x="5.4" y="0.8" width="2.4" height="4.9" rx=".8" fill="#8590ba" stroke="#59618e" stroke-width=".5"/><rect x="9.4" y="0.6" width="2.4" height="5.1" rx=".8" fill="#7d87b0" stroke="#3f4670" stroke-width=".5"/><rect x="10" y="0" width="1.2" height="1.2" fill="#20243a"/><rect x="0" y="5.6" width="12.7" height="1.3" fill="#8b93ad"/><rect x="0.6" y="6.9" width="11.6" height="1.2" fill="#e6e6f4"/><rect x="1.1" y="8" width="11" height="6.8" fill="#a3a3e4"/><rect x="2" y="8.6" width="9.2" height="5" fill="#dcdc30"/><path d="M2 8.6 L5 8.6 L2 10.6Z" fill="#d6d8e0"/><rect x="1.1" y="13.4" width="11" height="1.4" fill="#5a5ab8"/><rect x="4.2" y="10.6" width="1.3" height="1.2" fill="#2a3010"/><rect x="6.4" y="11.4" width="1.2" height="1.2" fill="#2a3010"/><rect x="8.3" y="10.4" width="1.2" height="1.2" fill="#3a4216"/></svg><span class="sim t" style="left:60.5px">PD3(15#)</span></div>
<div class="row" style="top:304px"><div class="hl" style="left:30px;top:8px;width:10px"></div><svg style="position:absolute;left:42px;top:1px" width="13" height="15" viewBox="0 0 13 15"><rect x="1.4" y="0.8" width="2.2" height="4.9" rx=".8" fill="#8590ba" stroke="#59618e" stroke-width=".5"/><rect x="5.4" y="0.8" width="2.4" height="4.9" rx=".8" fill="#8590ba" stroke="#59618e" stroke-width=".5"/><rect x="9.4" y="0.6" width="2.4" height="5.1" rx=".8" fill="#7d87b0" stroke="#3f4670" stroke-width=".5"/><rect x="10" y="0" width="1.2" height="1.2" fill="#20243a"/><rect x="0" y="5.6" width="12.7" height="1.3" fill="#8b93ad"/><rect x="0.6" y="6.9" width="11.6" height="1.2" fill="#e6e6f4"/><rect x="1.1" y="8" width="11" height="6.8" fill="#a3a3e4"/><rect x="2" y="8.6" width="9.2" height="5" fill="#dcdc30"/><path d="M2 8.6 L5 8.6 L2 10.6Z" fill="#d6d8e0"/><rect x="1.1" y="13.4" width="11" height="1.4" fill="#5a5ab8"/><rect x="4.2" y="10.6" width="1.3" height="1.2" fill="#2a3010"/><rect x="6.4" y="11.4" width="1.2" height="1.2" fill="#2a3010"/><rect x="8.3" y="10.4" width="1.2" height="1.2" fill="#3a4216"/></svg><span class="sim t" style="left:60.5px">PD4(16#)</span></div>
<div class="row" style="top:320px"><div class="hl" style="left:30px;top:8px;width:10px"></div><svg style="position:absolute;left:42px;top:1px" width="13" height="15" viewBox="0 0 13 15"><rect x="1.4" y="0.8" width="2.2" height="4.9" rx=".8" fill="#8590ba" stroke="#59618e" stroke-width=".5"/><rect x="5.4" y="0.8" width="2.4" height="4.9" rx=".8" fill="#8590ba" stroke="#59618e" stroke-width=".5"/><rect x="9.4" y="0.6" width="2.4" height="5.1" rx=".8" fill="#7d87b0" stroke="#3f4670" stroke-width=".5"/><rect x="10" y="0" width="1.2" height="1.2" fill="#20243a"/><rect x="0" y="5.6" width="12.7" height="1.3" fill="#8b93ad"/><rect x="0.6" y="6.9" width="11.6" height="1.2" fill="#e6e6f4"/><rect x="1.1" y="8" width="11" height="6.8" fill="#a3a3e4"/><rect x="2" y="8.6" width="9.2" height="5" fill="#dcdc30"/><path d="M2 8.6 L5 8.6 L2 10.6Z" fill="#d6d8e0"/><rect x="1.1" y="13.4" width="11" height="1.4" fill="#5a5ab8"/><rect x="4.2" y="10.6" width="1.3" height="1.2" fill="#2a3010"/><rect x="6.4" y="11.4" width="1.2" height="1.2" fill="#2a3010"/><rect x="8.3" y="10.4" width="1.2" height="1.2" fill="#3a4216"/></svg><span class="sim t" style="left:60.5px">PD5(17#)</span></div>
<div class="row" style="top:336px"><div class="hl" style="left:30px;top:8px;width:10px"></div><svg style="position:absolute;left:42px;top:1px" width="13" height="15" viewBox="0 0 13 15"><rect x="1.4" y="0.8" width="2.2" height="4.9" rx=".8" fill="#8590ba" stroke="#59618e" stroke-width=".5"/><rect x="5.4" y="0.8" width="2.4" height="4.9" rx=".8" fill="#8590ba" stroke="#59618e" stroke-width=".5"/><rect x="9.4" y="0.6" width="2.4" height="5.1" rx=".8" fill="#7d87b0" stroke="#3f4670" stroke-width=".5"/><rect x="10" y="0" width="1.2" height="1.2" fill="#20243a"/><rect x="0" y="5.6" width="12.7" height="1.3" fill="#8b93ad"/><rect x="0.6" y="6.9" width="11.6" height="1.2" fill="#e6e6f4"/><rect x="1.1" y="8" width="11" height="6.8" fill="#a3a3e4"/><rect x="2" y="8.6" width="9.2" height="5" fill="#dcdc30"/><path d="M2 8.6 L5 8.6 L2 10.6Z" fill="#d6d8e0"/><rect x="1.1" y="13.4" width="11" height="1.4" fill="#5a5ab8"/><rect x="4.2" y="10.6" width="1.3" height="1.2" fill="#2a3010"/><rect x="6.4" y="11.4" width="1.2" height="1.2" fill="#2a3010"/><rect x="8.3" y="10.4" width="1.2" height="1.2" fill="#3a4216"/></svg><span class="sim t" style="left:60.5px">PD6(18#)</span></div>
<div class="row" style="top:352px"><div class="hl" style="left:30px;top:8px;width:10px"></div><svg style="position:absolute;left:42px;top:1px" width="13" height="15" viewBox="0 0 13 15"><rect x="1.4" y="0.8" width="2.2" height="4.9" rx=".8" fill="#8590ba" stroke="#59618e" stroke-width=".5"/><rect x="5.4" y="0.8" width="2.4" height="4.9" rx=".8" fill="#8590ba" stroke="#59618e" stroke-width=".5"/><rect x="9.4" y="0.6" width="2.4" height="5.1" rx=".8" fill="#7d87b0" stroke="#3f4670" stroke-width=".5"/><rect x="10" y="0" width="1.2" height="1.2" fill="#20243a"/><rect x="0" y="5.6" width="12.7" height="1.3" fill="#8b93ad"/><rect x="0.6" y="6.9" width="11.6" height="1.2" fill="#e6e6f4"/><rect x="1.1" y="8" width="11" height="6.8" fill="#a3a3e4"/><rect x="2" y="8.6" width="9.2" height="5" fill="#dcdc30"/><path d="M2 8.6 L5 8.6 L2 10.6Z" fill="#d6d8e0"/><rect x="1.1" y="13.4" width="11" height="1.4" fill="#5a5ab8"/><rect x="4.2" y="10.6" width="1.3" height="1.2" fill="#2a3010"/><rect x="6.4" y="11.4" width="1.2" height="1.2" fill="#2a3010"/><rect x="8.3" y="10.4" width="1.2" height="1.2" fill="#3a4216"/></svg><span class="sim t" style="left:60.5px">PD7(19#)</span></div>
<div class="row" style="top:368px"><div class="hl" style="left:30px;top:8px;width:10px"></div><svg style="position:absolute;left:42px;top:1px" width="13" height="15" viewBox="0 0 13 15"><rect x="1.4" y="0.8" width="2.2" height="4.9" rx=".8" fill="#8590ba" stroke="#59618e" stroke-width=".5"/><rect x="5.4" y="0.8" width="2.4" height="4.9" rx=".8" fill="#8590ba" stroke="#59618e" stroke-width=".5"/><rect x="9.4" y="0.6" width="2.4" height="5.1" rx=".8" fill="#7d87b0" stroke="#3f4670" stroke-width=".5"/><rect x="10" y="0" width="1.2" height="1.2" fill="#20243a"/><rect x="0" y="5.6" width="12.7" height="1.3" fill="#8b93ad"/><rect x="0.6" y="6.9" width="11.6" height="1.2" fill="#e6e6f4"/><rect x="1.1" y="8" width="11" height="6.8" fill="#a3a3e4"/><rect x="2" y="8.6" width="9.2" height="5" fill="#dcdc30"/><path d="M2 8.6 L5 8.6 L2 10.6Z" fill="#d6d8e0"/><rect x="1.1" y="13.4" width="11" height="1.4" fill="#5a5ab8"/><rect x="4.2" y="10.6" width="1.3" height="1.2" fill="#2a3010"/><rect x="6.4" y="11.4" width="1.2" height="1.2" fill="#2a3010"/><rect x="8.3" y="10.4" width="1.2" height="1.2" fill="#3a4216"/></svg><span class="sim t" style="left:60.5px">PD8(20#)</span></div>
<div class="row" style="top:384px"><div class="hl" style="left:30px;top:8px;width:10px"></div><svg style="position:absolute;left:42px;top:1px" width="13" height="15" viewBox="0 0 13 15"><rect x="1.4" y="0.8" width="2.2" height="4.9" rx=".8" fill="#8590ba" stroke="#59618e" stroke-width=".5"/><rect x="5.4" y="0.8" width="2.4" height="4.9" rx=".8" fill="#8590ba" stroke="#59618e" stroke-width=".5"/><rect x="9.4" y="0.6" width="2.4" height="5.1" rx=".8" fill="#7d87b0" stroke="#3f4670" stroke-width=".5"/><rect x="10" y="0" width="1.2" height="1.2" fill="#20243a"/><rect x="0" y="5.6" width="12.7" height="1.3" fill="#8b93ad"/><rect x="0.6" y="6.9" width="11.6" height="1.2" fill="#e6e6f4"/><rect x="1.1" y="8" width="11" height="6.8" fill="#a3a3e4"/><rect x="2" y="8.6" width="9.2" height="5" fill="#dcdc30"/><path d="M2 8.6 L5 8.6 L2 10.6Z" fill="#d6d8e0"/><rect x="1.1" y="13.4" width="11" height="1.4" fill="#5a5ab8"/><rect x="4.2" y="10.6" width="1.3" height="1.2" fill="#2a3010"/><rect x="6.4" y="11.4" width="1.2" height="1.2" fill="#2a3010"/><rect x="8.3" y="10.4" width="1.2" height="1.2" fill="#3a4216"/></svg><span class="sim t" style="left:60.5px">PD9(21#)</span></div>
<div class="row" style="top:400px"><div class="hl" style="left:30px;top:8px;width:10px"></div><svg style="position:absolute;left:42px;top:1px" width="13" height="15" viewBox="0 0 13 15"><rect x="1.4" y="0.8" width="2.2" height="4.9" rx=".8" fill="#8590ba" stroke="#59618e" stroke-width=".5"/><rect x="5.4" y="0.8" width="2.4" height="4.9" rx=".8" fill="#8590ba" stroke="#59618e" stroke-width=".5"/><rect x="9.4" y="0.6" width="2.4" height="5.1" rx=".8" fill="#7d87b0" stroke="#3f4670" stroke-width=".5"/><rect x="10" y="0" width="1.2" height="1.2" fill="#20243a"/><rect x="0" y="5.6" width="12.7" height="1.3" fill="#8b93ad"/><rect x="0.6" y="6.9" width="11.6" height="1.2" fill="#e6e6f4"/><rect x="1.1" y="8" width="11" height="6.8" fill="#a3a3e4"/><rect x="2" y="8.6" width="9.2" height="5" fill="#dcdc30"/><path d="M2 8.6 L5 8.6 L2 10.6Z" fill="#d6d8e0"/><rect x="1.1" y="13.4" width="11" height="1.4" fill="#5a5ab8"/><rect x="4.2" y="10.6" width="1.3" height="1.2" fill="#2a3010"/><rect x="6.4" y="11.4" width="1.2" height="1.2" fill="#2a3010"/><rect x="8.3" y="10.4" width="1.2" height="1.2" fill="#3a4216"/></svg><span class="sim t" style="left:60.5px">PD10(22#)</span></div>
<div class="row" style="top:416px"><div class="hl" style="left:30px;top:8px;width:10px"></div><svg style="position:absolute;left:42px;top:1px" width="13" height="15" viewBox="0 0 13 15"><rect x="1.4" y="0.8" width="2.2" height="4.9" rx=".8" fill="#8590ba" stroke="#59618e" stroke-width=".5"/><rect x="5.4" y="0.8" width="2.4" height="4.9" rx=".8" fill="#8590ba" stroke="#59618e" stroke-width=".5"/><rect x="9.4" y="0.6" width="2.4" height="5.1" rx=".8" fill="#7d87b0" stroke="#3f4670" stroke-width=".5"/><rect x="10" y="0" width="1.2" height="1.2" fill="#20243a"/><rect x="0" y="5.6" width="12.7" height="1.3" fill="#8b93ad"/><rect x="0.6" y="6.9" width="11.6" height="1.2" fill="#e6e6f4"/><rect x="1.1" y="8" width="11" height="6.8" fill="#a3a3e4"/><rect x="2" y="8.6" width="9.2" height="5" fill="#dcdc30"/><path d="M2 8.6 L5 8.6 L2 10.6Z" fill="#d6d8e0"/><rect x="1.1" y="13.4" width="11" height="1.4" fill="#5a5ab8"/><rect x="4.2" y="10.6" width="1.3" height="1.2" fill="#2a3010"/><rect x="6.4" y="11.4" width="1.2" height="1.2" fill="#2a3010"/><rect x="8.3" y="10.4" width="1.2" height="1.2" fill="#3a4216"/></svg><span class="sim t" style="left:60.5px">PD11(23#)</span></div>
<div class="row" style="top:432px"><div class="hl" style="left:30px;top:8px;width:10px"></div><svg style="position:absolute;left:42px;top:1px" width="13" height="15" viewBox="0 0 13 15"><rect x="1.4" y="0.8" width="2.2" height="4.9" rx=".8" fill="#8590ba" stroke="#59618e" stroke-width=".5"/><rect x="5.4" y="0.8" width="2.4" height="4.9" rx=".8" fill="#8590ba" stroke="#59618e" stroke-width=".5"/><rect x="9.4" y="0.6" width="2.4" height="5.1" rx=".8" fill="#7d87b0" stroke="#3f4670" stroke-width=".5"/><rect x="10" y="0" width="1.2" height="1.2" fill="#20243a"/><rect x="0" y="5.6" width="12.7" height="1.3" fill="#8b93ad"/><rect x="0.6" y="6.9" width="11.6" height="1.2" fill="#e6e6f4"/><rect x="1.1" y="8" width="11" height="6.8" fill="#a3a3e4"/><rect x="2" y="8.6" width="9.2" height="5" fill="#dcdc30"/><path d="M2 8.6 L5 8.6 L2 10.6Z" fill="#d6d8e0"/><rect x="1.1" y="13.4" width="11" height="1.4" fill="#5a5ab8"/><rect x="4.2" y="10.6" width="1.3" height="1.2" fill="#2a3010"/><rect x="6.4" y="11.4" width="1.2" height="1.2" fill="#2a3010"/><rect x="8.3" y="10.4" width="1.2" height="1.2" fill="#3a4216"/></svg><span class="sim t" style="left:60.5px">PD12(24#)</span></div>
<div class="row" style="top:448px"><div class="box" style="left:6px;top:4px"></div><div class="hl" style="left:16px;top:8px;width:6px"></div><svg style="position:absolute;left:23px;top:1px" width="13" height="15" viewBox="0 0 13 15"><rect x="0.5" y="0.8" width="11.5" height="13.6" rx="1.5" fill="#e4f7f7"/><rect x="0" y="0.5" width="2" height="2" fill="#f9dde4" opacity=".8"/><rect x="0" y="12.5" width="2" height="2" fill="#f9dde4" opacity=".8"/><rect x="10.5" y="3" width="2" height="11" fill="#e3e6ea" opacity=".8"/><rect x="5.9" y="1" width="1.2" height="1.9" fill="#10222a"/><rect x="1.2" y="4" width="10" height="1.1" fill="#1d4f55"/><rect x="3.4" y="5.8" width="6.2" height="7.2" fill="#8ceaea"/><rect x="3.9" y="7" width="5.3" height="1" fill="#149eb2"/><rect x="3.9" y="9" width="5.3" height="1" fill="#149eb2"/><rect x="3.9" y="11" width="5.3" height="1" fill="#149eb2"/><rect x="2.8" y="13" width="7.3" height="1.1" fill="#1d4f55"/></svg><span class="sim t" style="left:42.5px">3#</span></div>
<div class="vl" style="left:29px;top:464px;height:188px"></div>
<div class="row" style="top:464px"><div class="hl" style="left:30px;top:8px;width:10px"></div><svg style="position:absolute;left:42px;top:1px" width="13" height="15" viewBox="0 0 13 15"><rect x="1.4" y="0.8" width="2.2" height="4.9" rx=".8" fill="#8590ba" stroke="#59618e" stroke-width=".5"/><rect x="5.4" y="0.8" width="2.4" height="4.9" rx=".8" fill="#8590ba" stroke="#59618e" stroke-width=".5"/><rect x="9.4" y="0.6" width="2.4" height="5.1" rx=".8" fill="#7d87b0" stroke="#3f4670" stroke-width=".5"/><rect x="10" y="0" width="1.2" height="1.2" fill="#20243a"/><rect x="0" y="5.6" width="12.7" height="1.3" fill="#8b93ad"/><rect x="0.6" y="6.9" width="11.6" height="1.2" fill="#e6e6f4"/><rect x="1.1" y="8" width="11" height="6.8" fill="#a3a3e4"/><rect x="2" y="8.6" width="9.2" height="5" fill="#dcdc30"/><path d="M2 8.6 L5 8.6 L2 10.6Z" fill="#d6d8e0"/><rect x="1.1" y="13.4" width="11" height="1.4" fill="#5a5ab8"/><rect x="4.2" y="10.6" width="1.3" height="1.2" fill="#2a3010"/><rect x="6.4" y="11.4" width="1.2" height="1.2" fill="#2a3010"/><rect x="8.3" y="10.4" width="1.2" height="1.2" fill="#3a4216"/></svg><span class="sim t" style="left:60.5px">NOISE<span style="font-family:'Noto Sans CJK SC',sans-serif;font-weight:700;font-size:12px;line-height:0;letter-spacing:0;display:inline-block;transform:scaleX(1.19);transform-origin:0 50%;margin-left:-0.5px;margin-right:2.3px">【</span>Noise C:</span></div>
<div class="row" style="top:480px"><div class="hl" style="left:30px;top:8px;width:10px"></div><svg style="position:absolute;left:42px;top:1px" width="13" height="15" viewBox="0 0 13 15"><rect x="1.4" y="0.8" width="2.2" height="4.9" rx=".8" fill="#8590ba" stroke="#59618e" stroke-width=".5"/><rect x="5.4" y="0.8" width="2.4" height="4.9" rx=".8" fill="#8590ba" stroke="#59618e" stroke-width=".5"/><rect x="9.4" y="0.6" width="2.4" height="5.1" rx=".8" fill="#7d87b0" stroke="#3f4670" stroke-width=".5"/><rect x="10" y="0" width="1.2" height="1.2" fill="#20243a"/><rect x="0" y="5.6" width="12.7" height="1.3" fill="#8b93ad"/><rect x="0.6" y="6.9" width="11.6" height="1.2" fill="#e6e6f4"/><rect x="1.1" y="8" width="11" height="6.8" fill="#a3a3e4"/><rect x="2" y="8.6" width="9.2" height="5" fill="#dcdc30"/><path d="M2 8.6 L5 8.6 L2 10.6Z" fill="#d6d8e0"/><rect x="1.1" y="13.4" width="11" height="1.4" fill="#5a5ab8"/><rect x="4.2" y="10.6" width="1.3" height="1.2" fill="#2a3010"/><rect x="6.4" y="11.4" width="1.2" height="1.2" fill="#2a3010"/><rect x="8.3" y="10.4" width="1.2" height="1.2" fill="#3a4216"/></svg><span class="sim t" style="left:60.5px">PD1(25#)</span></div>
<div class="row" style="top:496px"><div class="hl" style="left:30px;top:8px;width:10px"></div><svg style="position:absolute;left:42px;top:1px" width="13" height="15" viewBox="0 0 13 15"><rect x="1.4" y="0.8" width="2.2" height="4.9" rx=".8" fill="#8590ba" stroke="#59618e" stroke-width=".5"/><rect x="5.4" y="0.8" width="2.4" height="4.9" rx=".8" fill="#8590ba" stroke="#59618e" stroke-width=".5"/><rect x="9.4" y="0.6" width="2.4" height="5.1" rx=".8" fill="#7d87b0" stroke="#3f4670" stroke-width=".5"/><rect x="10" y="0" width="1.2" height="1.2" fill="#20243a"/><rect x="0" y="5.6" width="12.7" height="1.3" fill="#8b93ad"/><rect x="0.6" y="6.9" width="11.6" height="1.2" fill="#e6e6f4"/><rect x="1.1" y="8" width="11" height="6.8" fill="#a3a3e4"/><rect x="2" y="8.6" width="9.2" height="5" fill="#dcdc30"/><path d="M2 8.6 L5 8.6 L2 10.6Z" fill="#d6d8e0"/><rect x="1.1" y="13.4" width="11" height="1.4" fill="#5a5ab8"/><rect x="4.2" y="10.6" width="1.3" height="1.2" fill="#2a3010"/><rect x="6.4" y="11.4" width="1.2" height="1.2" fill="#2a3010"/><rect x="8.3" y="10.4" width="1.2" height="1.2" fill="#3a4216"/></svg><span class="sim t" style="left:60.5px">PD2(26#)</span></div>
<div class="row" style="top:512px"><div class="hl" style="left:30px;top:8px;width:10px"></div><svg style="position:absolute;left:42px;top:1px" width="13" height="15" viewBox="0 0 13 15"><rect x="1.4" y="0.8" width="2.2" height="4.9" rx=".8" fill="#8590ba" stroke="#59618e" stroke-width=".5"/><rect x="5.4" y="0.8" width="2.4" height="4.9" rx=".8" fill="#8590ba" stroke="#59618e" stroke-width=".5"/><rect x="9.4" y="0.6" width="2.4" height="5.1" rx=".8" fill="#7d87b0" stroke="#3f4670" stroke-width=".5"/><rect x="10" y="0" width="1.2" height="1.2" fill="#20243a"/><rect x="0" y="5.6" width="12.7" height="1.3" fill="#8b93ad"/><rect x="0.6" y="6.9" width="11.6" height="1.2" fill="#e6e6f4"/><rect x="1.1" y="8" width="11" height="6.8" fill="#a3a3e4"/><rect x="2" y="8.6" width="9.2" height="5" fill="#dcdc30"/><path d="M2 8.6 L5 8.6 L2 10.6Z" fill="#d6d8e0"/><rect x="1.1" y="13.4" width="11" height="1.4" fill="#5a5ab8"/><rect x="4.2" y="10.6" width="1.3" height="1.2" fill="#2a3010"/><rect x="6.4" y="11.4" width="1.2" height="1.2" fill="#2a3010"/><rect x="8.3" y="10.4" width="1.2" height="1.2" fill="#3a4216"/></svg><span class="sim t" style="left:60.5px">PD3(27#)</span></div>
<div class="row" style="top:528px"><div class="hl" style="left:30px;top:8px;width:10px"></div><svg style="position:absolute;left:42px;top:1px" width="13" height="15" viewBox="0 0 13 15"><rect x="1.4" y="0.8" width="2.2" height="4.9" rx=".8" fill="#8590ba" stroke="#59618e" stroke-width=".5"/><rect x="5.4" y="0.8" width="2.4" height="4.9" rx=".8" fill="#8590ba" stroke="#59618e" stroke-width=".5"/><rect x="9.4" y="0.6" width="2.4" height="5.1" rx=".8" fill="#7d87b0" stroke="#3f4670" stroke-width=".5"/><rect x="10" y="0" width="1.2" height="1.2" fill="#20243a"/><rect x="0" y="5.6" width="12.7" height="1.3" fill="#8b93ad"/><rect x="0.6" y="6.9" width="11.6" height="1.2" fill="#e6e6f4"/><rect x="1.1" y="8" width="11" height="6.8" fill="#a3a3e4"/><rect x="2" y="8.6" width="9.2" height="5" fill="#dcdc30"/><path d="M2 8.6 L5 8.6 L2 10.6Z" fill="#d6d8e0"/><rect x="1.1" y="13.4" width="11" height="1.4" fill="#5a5ab8"/><rect x="4.2" y="10.6" width="1.3" height="1.2" fill="#2a3010"/><rect x="6.4" y="11.4" width="1.2" height="1.2" fill="#2a3010"/><rect x="8.3" y="10.4" width="1.2" height="1.2" fill="#3a4216"/></svg><span class="sim t" style="left:60.5px">PD4(28#)</span></div>
<div class="row" style="top:544px"><div class="hl" style="left:30px;top:8px;width:10px"></div><svg style="position:absolute;left:42px;top:1px" width="13" height="15" viewBox="0 0 13 15"><rect x="1.4" y="0.8" width="2.2" height="4.9" rx=".8" fill="#8590ba" stroke="#59618e" stroke-width=".5"/><rect x="5.4" y="0.8" width="2.4" height="4.9" rx=".8" fill="#8590ba" stroke="#59618e" stroke-width=".5"/><rect x="9.4" y="0.6" width="2.4" height="5.1" rx=".8" fill="#7d87b0" stroke="#3f4670" stroke-width=".5"/><rect x="10" y="0" width="1.2" height="1.2" fill="#20243a"/><rect x="0" y="5.6" width="12.7" height="1.3" fill="#8b93ad"/><rect x="0.6" y="6.9" width="11.6" height="1.2" fill="#e6e6f4"/><rect x="1.1" y="8" width="11" height="6.8" fill="#a3a3e4"/><rect x="2" y="8.6" width="9.2" height="5" fill="#dcdc30"/><path d="M2 8.6 L5 8.6 L2 10.6Z" fill="#d6d8e0"/><rect x="1.1" y="13.4" width="11" height="1.4" fill="#5a5ab8"/><rect x="4.2" y="10.6" width="1.3" height="1.2" fill="#2a3010"/><rect x="6.4" y="11.4" width="1.2" height="1.2" fill="#2a3010"/><rect x="8.3" y="10.4" width="1.2" height="1.2" fill="#3a4216"/></svg><span class="sim t" style="left:60.5px">PD5(29#)</span></div>
<div class="row" style="top:560px"><div class="hl" style="left:30px;top:8px;width:10px"></div><svg style="position:absolute;left:42px;top:1px" width="13" height="15" viewBox="0 0 13 15"><rect x="1.4" y="0.8" width="2.2" height="4.9" rx=".8" fill="#8590ba" stroke="#59618e" stroke-width=".5"/><rect x="5.4" y="0.8" width="2.4" height="4.9" rx=".8" fill="#8590ba" stroke="#59618e" stroke-width=".5"/><rect x="9.4" y="0.6" width="2.4" height="5.1" rx=".8" fill="#7d87b0" stroke="#3f4670" stroke-width=".5"/><rect x="10" y="0" width="1.2" height="1.2" fill="#20243a"/><rect x="0" y="5.6" width="12.7" height="1.3" fill="#8b93ad"/><rect x="0.6" y="6.9" width="11.6" height="1.2" fill="#e6e6f4"/><rect x="1.1" y="8" width="11" height="6.8" fill="#a3a3e4"/><rect x="2" y="8.6" width="9.2" height="5" fill="#dcdc30"/><path d="M2 8.6 L5 8.6 L2 10.6Z" fill="#d6d8e0"/><rect x="1.1" y="13.4" width="11" height="1.4" fill="#5a5ab8"/><rect x="4.2" y="10.6" width="1.3" height="1.2" fill="#2a3010"/><rect x="6.4" y="11.4" width="1.2" height="1.2" fill="#2a3010"/><rect x="8.3" y="10.4" width="1.2" height="1.2" fill="#3a4216"/></svg><span class="sim t" style="left:60.5px">PD6(30#)</span></div>
<div class="row" style="top:576px"><div class="hl" style="left:30px;top:8px;width:10px"></div><svg style="position:absolute;left:42px;top:1px" width="13" height="15" viewBox="0 0 13 15"><rect x="1.4" y="0.8" width="2.2" height="4.9" rx=".8" fill="#8590ba" stroke="#59618e" stroke-width=".5"/><rect x="5.4" y="0.8" width="2.4" height="4.9" rx=".8" fill="#8590ba" stroke="#59618e" stroke-width=".5"/><rect x="9.4" y="0.6" width="2.4" height="5.1" rx=".8" fill="#7d87b0" stroke="#3f4670" stroke-width=".5"/><rect x="10" y="0" width="1.2" height="1.2" fill="#20243a"/><rect x="0" y="5.6" width="12.7" height="1.3" fill="#8b93ad"/><rect x="0.6" y="6.9" width="11.6" height="1.2" fill="#e6e6f4"/><rect x="1.1" y="8" width="11" height="6.8" fill="#a3a3e4"/><rect x="2" y="8.6" width="9.2" height="5" fill="#dcdc30"/><path d="M2 8.6 L5 8.6 L2 10.6Z" fill="#d6d8e0"/><rect x="1.1" y="13.4" width="11" height="1.4" fill="#5a5ab8"/><rect x="4.2" y="10.6" width="1.3" height="1.2" fill="#2a3010"/><rect x="6.4" y="11.4" width="1.2" height="1.2" fill="#2a3010"/><rect x="8.3" y="10.4" width="1.2" height="1.2" fill="#3a4216"/></svg><span class="sim t" style="left:60.5px">PD7(31#)</span></div>
<div class="row" style="top:592px"><div class="hl" style="left:30px;top:8px;width:10px"></div><svg style="position:absolute;left:42px;top:1px" width="13" height="15" viewBox="0 0 13 15"><rect x="1.4" y="0.8" width="2.2" height="4.9" rx=".8" fill="#8590ba" stroke="#59618e" stroke-width=".5"/><rect x="5.4" y="0.8" width="2.4" height="4.9" rx=".8" fill="#8590ba" stroke="#59618e" stroke-width=".5"/><rect x="9.4" y="0.6" width="2.4" height="5.1" rx=".8" fill="#7d87b0" stroke="#3f4670" stroke-width=".5"/><rect x="10" y="0" width="1.2" height="1.2" fill="#20243a"/><rect x="0" y="5.6" width="12.7" height="1.3" fill="#8b93ad"/><rect x="0.6" y="6.9" width="11.6" height="1.2" fill="#e6e6f4"/><rect x="1.1" y="8" width="11" height="6.8" fill="#a3a3e4"/><rect x="2" y="8.6" width="9.2" height="5" fill="#dcdc30"/><path d="M2 8.6 L5 8.6 L2 10.6Z" fill="#d6d8e0"/><rect x="1.1" y="13.4" width="11" height="1.4" fill="#5a5ab8"/><rect x="4.2" y="10.6" width="1.3" height="1.2" fill="#2a3010"/><rect x="6.4" y="11.4" width="1.2" height="1.2" fill="#2a3010"/><rect x="8.3" y="10.4" width="1.2" height="1.2" fill="#3a4216"/></svg><span class="sim t" style="left:60.5px">PD8(32#)</span></div>
<div class="row" style="top:608px"><div class="hl" style="left:30px;top:8px;width:10px"></div><svg style="position:absolute;left:42px;top:1px" width="13" height="15" viewBox="0 0 13 15"><rect x="1.4" y="0.8" width="2.2" height="4.9" rx=".8" fill="#8590ba" stroke="#59618e" stroke-width=".5"/><rect x="5.4" y="0.8" width="2.4" height="4.9" rx=".8" fill="#8590ba" stroke="#59618e" stroke-width=".5"/><rect x="9.4" y="0.6" width="2.4" height="5.1" rx=".8" fill="#7d87b0" stroke="#3f4670" stroke-width=".5"/><rect x="10" y="0" width="1.2" height="1.2" fill="#20243a"/><rect x="0" y="5.6" width="12.7" height="1.3" fill="#8b93ad"/><rect x="0.6" y="6.9" width="11.6" height="1.2" fill="#e6e6f4"/><rect x="1.1" y="8" width="11" height="6.8" fill="#a3a3e4"/><rect x="2" y="8.6" width="9.2" height="5" fill="#dcdc30"/><path d="M2 8.6 L5 8.6 L2 10.6Z" fill="#d6d8e0"/><rect x="1.1" y="13.4" width="11" height="1.4" fill="#5a5ab8"/><rect x="4.2" y="10.6" width="1.3" height="1.2" fill="#2a3010"/><rect x="6.4" y="11.4" width="1.2" height="1.2" fill="#2a3010"/><rect x="8.3" y="10.4" width="1.2" height="1.2" fill="#3a4216"/></svg><span class="sim t" style="left:60.5px">PD9(33#)</span></div>
<div class="row" style="top:624px"><div class="hl" style="left:30px;top:8px;width:10px"></div><svg style="position:absolute;left:42px;top:1px" width="13" height="15" viewBox="0 0 13 15"><rect x="1.4" y="0.8" width="2.2" height="4.9" rx=".8" fill="#8590ba" stroke="#59618e" stroke-width=".5"/><rect x="5.4" y="0.8" width="2.4" height="4.9" rx=".8" fill="#8590ba" stroke="#59618e" stroke-width=".5"/><rect x="9.4" y="0.6" width="2.4" height="5.1" rx=".8" fill="#7d87b0" stroke="#3f4670" stroke-width=".5"/><rect x="10" y="0" width="1.2" height="1.2" fill="#20243a"/><rect x="0" y="5.6" width="12.7" height="1.3" fill="#8b93ad"/><rect x="0.6" y="6.9" width="11.6" height="1.2" fill="#e6e6f4"/><rect x="1.1" y="8" width="11" height="6.8" fill="#a3a3e4"/><rect x="2" y="8.6" width="9.2" height="5" fill="#dcdc30"/><path d="M2 8.6 L5 8.6 L2 10.6Z" fill="#d6d8e0"/><rect x="1.1" y="13.4" width="11" height="1.4" fill="#5a5ab8"/><rect x="4.2" y="10.6" width="1.3" height="1.2" fill="#2a3010"/><rect x="6.4" y="11.4" width="1.2" height="1.2" fill="#2a3010"/><rect x="8.3" y="10.4" width="1.2" height="1.2" fill="#3a4216"/></svg><span class="sim t" style="left:60.5px">PD10(34#)</span></div>
</div>
<div style="position:absolute;left:147px;top:64px;width:17px;height:636px;background:linear-gradient(90deg,#e4e4e4,#f2f2f2 30%,#f6f6f6)"></div>
<svg style="position:absolute;left:151px;top:70px" width="9" height="6" viewBox="0 0 9 6"><path d="M0.5 5.5 L4.5 0.8 L8.5 5.5Z" fill="#4d5560"/></svg>
<svg style="position:absolute;left:151px;top:688px" width="9" height="6" viewBox="0 0 9 6"><path d="M0.5 0.5 L4.5 5.2 L8.5 0.5Z" fill="#4d5560"/></svg>
<div style="position:absolute;left:147.5px;top:82px;width:14.5px;height:543px;border:1px solid #979797;border-radius:2px;background:linear-gradient(90deg,#f4f4f4,#e6e6e6 45%,#cfcfcf 55%,#d8d8d8)"></div>
<div style="position:absolute;left:151px;top:349px;width:8px;height:7px;background:repeating-linear-gradient(180deg,#6a6a6a 0,#6a6a6a 1px,#f4f4f4 1px,#f4f4f4 2px)"></div>

<div style="position:absolute;left:0;top:700px;width:164px;height:16px;background:linear-gradient(180deg,#e6e6e6,#f3f3f3 30%,#f6f6f6)"></div>
<svg style="position:absolute;left:5px;top:704px" width="6" height="9" viewBox="0 0 6 9"><path d="M5.5 0.5 L0.8 4.5 L5.5 8.5Z" fill="#4d5560"/></svg>
<svg style="position:absolute;left:136px;top:704px" width="6" height="9" viewBox="0 0 6 9"><path d="M0.5 0.5 L5.2 4.5 L0.5 8.5Z" fill="#4d5560"/></svg>
<div style="position:absolute;left:17px;top:701px;width:83px;height:14px;border:1px solid #979797;border-radius:2px;background:linear-gradient(180deg,#f4f4f4,#e6e6e6 45%,#cfcfcf 55%,#d8d8d8)"></div>
<div style="position:absolute;left:54px;top:704px;width:7px;height:8px;background:repeating-linear-gradient(90deg,#6a6a6a 0,#6a6a6a 1px,#f4f4f4 1px,#f4f4f4 2px)"></div>

<div style="position:absolute;left:169px;top:44px;width:1268px;height:674px;border:1px solid #a3a7ad;border-right:none;box-shadow:inset 0 -1px 0 #fff"></div>
<div style="position:absolute;left:170px;top:67px;width:1265px;height:1px;background:#7c7c7c"></div>
<svg style="position:absolute;left:170px;top:45px" width="110" height="23" viewBox="0 0 110 23"><defs><linearGradient id="tg" x1="0" y1="0" x2="0" y2="1"><stop offset="0" stop-color="#fff"/><stop offset=".6" stop-color="#fdfdfd"/><stop offset="1" stop-color="#f3f3f3"/></linearGradient></defs><path d="M5.5 22.5 L26 4.5 Q27 3.5 29 3.5 L101 3.5 Q104.5 3.5 104.5 7 L104.5 22.5Z" fill="url(#tg)"/><path d="M0 22.5 L5.5 22.5 L26 4.5 Q27 3.5 29 3.5 L101 3.5 Q104.5 3.5 104.5 7 L104.5 22.5" fill="none" stroke="#8a8a8a" stroke-width="1"/></svg>
<div class="ui" id="tabt" style="position:absolute;left:195.5px;top:50px;font-weight:bold;font-size:13px;letter-spacing:.25px;color:#000">1#\PD1(1#)</div>
<svg style="position:absolute;left:1401px;top:55px" width="10" height="6" viewBox="0 0 10 6"><path d="M0.5 0.8 L9.5 0.8 L5 5.5Z" fill="#000"/></svg>
<svg style="position:absolute;left:1417px;top:52px" width="11" height="10" viewBox="0 0 11 10"><path d="M1.5 1 L9.5 9 M9.5 1 L1.5 9" stroke="#000" stroke-width="1.5"/></svg>

<div style="position:absolute;left:172px;top:89px;width:1262px;height:627px;border:1px solid #a9acb2;border-bottom-color:#8f8f8f;background:#f0f0f0;box-shadow:inset 0 -2px 0 #fff"></div>
<div style="position:absolute;left:172px;top:72px;width:113px;height:18px;border:1px solid #8e9299;border-bottom:none;background:linear-gradient(180deg,#f3f3f3,#ebebeb 50%,#dcdcdc 52%,#d2d2d2)"></div>
<div style="position:absolute;left:284px;top:69px;width:106px;height:22px;border:1px solid #8e9299;border-bottom:none;background:#fff"></div>
<div style="position:absolute;left:285px;top:89px;width:104px;height:2px;background:#fdfdfd"></div>
<div class="sim" style="position:absolute;left:177px;top:74.8px">Real Time Monitor</div>
<div class="sim" style="position:absolute;left:291px;top:73px">History Archive</div>

<div style="position:absolute;left:177px;top:91px;width:139px;height:546px;background:#fff;border:1px solid #828790"></div>
<div id="hist" style="position:absolute;left:178px;top:92px;width:120px;height:543px;overflow:hidden">
<div class="vl" style="left:32px;top:13px;height:530px"></div>
<div class="vl" style="left:51px;top:27px;height:360px"></div>
<div style="position:absolute;left:0;top:2px;width:120px;height:14px"><div class="box" style="left:9px;top:2px"></div><div class="hl" style="left:19px;top:6px;width:4px"></div><span class="sim" style="position:absolute;left:24.5px;top:0">History Archive</span></div>
<div style="position:absolute;left:0;top:16px;width:120px;height:14px"><div class="box" style="left:28px;top:2px"></div><div class="hl" style="left:38px;top:6px;width:4px"></div><span class="sim" style="position:absolute;left:43.5px;top:0">2016-02-27</span></div>
<div style="position:absolute;left:0;top:30px;width:120px;height:14px"><div class="hl" style="left:52px;top:6px;width:8px"></div><span class="sim" style="position:absolute;left:62px;top:0">17:00</span></div>
<div style="position:absolute;left:0;top:44px;width:120px;height:14px"><div class="hl" style="left:52px;top:6px;width:8px"></div><span class="sim" style="position:absolute;left:62px;top:0">16:45</span></div>
<div style="position:absolute;left:0;top:58px;width:120px;height:14px"><div class="hl" style="left:52px;top:6px;width:8px"></div><span class="sim" style="position:absolute;left:62px;top:0">16:30</span></div>
<div style="position:absolute;left:0;top:72px;width:120px;height:14px"><div class="hl" style="left:52px;top:6px;width:8px"></div><span class="sim" style="position:absolute;left:62px;top:0">16:15</span></div>
<div style="position:absolute;left:0;top:86px;width:120px;height:14px"><div class="hl" style="left:52px;top:6px;width:8px"></div><span class="sim" style="position:absolute;left:62px;top:0">16:00</span></div>
<div style="position:absolute;left:0;top:100px;width:120px;height:14px"><div class="hl" style="left:52px;top:6px;width:8px"></div><span class="sim" style="position:absolute;left:62px;top:0">15:45</span></div>
<div style="position:absolute;left:0;top:114px;width:120px;height:14px"><div class="hl" style="left:52px;top:6px;width:8px"></div><span class="sim" style="position:absolute;left:62px;top:0">15:30</span></div>
<div style="position:absolute;left:0;top:128px;width:120px;height:14px"><div class="hl" style="left:52px;top:6px;width:8px"></div><span class="sim" style="position:absolute;left:62px;top:0">15:15</span></div>
<div style="position:absolute;left:0;top:142px;width:120px;height:14px"><div class="hl" style="left:52px;top:6px;width:8px"></div><span class="sim" style="position:absolute;left:62px;top:0">15:00</span></div>
<div style="position:absolute;left:0;top:156px;width:120px;height:14px"><div class="hl" style="left:52px;top:6px;width:8px"></div><span class="sim" style="position:absolute;left:62px;top:0">14:45</span></div>
<div style="position:absolute;left:0;top:170px;width:120px;height:14px"><div class="hl" style="left:52px;top:6px;width:8px"></div><span class="sim" style="position:absolute;left:62px;top:0">14:30</span></div>
<div style="position:absolute;left:0;top:184px;width:120px;height:14px"><div class="hl" style="left:52px;top:6px;width:8px"></div><span class="sim" style="position:absolute;left:62px;top:0">14:15</span></div>
<div style="position:absolute;left:0;top:198px;width:120px;height:14px"><div class="hl" style="left:52px;top:6px;width:8px"></div><span class="sim" style="position:absolute;left:62px;top:0">14:00</span></div>
<div style="position:absolute;left:0;top:212px;width:120px;height:14px"><div class="hl" style="left:52px;top:6px;width:8px"></div><span class="sim" style="position:absolute;left:62px;top:0">13:45</span></div>
<div style="position:absolute;left:0;top:226px;width:120px;height:14px"><div class="hl" style="left:52px;top:6px;width:8px"></div><span class="sim" style="position:absolute;left:62px;top:0">13:30</span></div>
<div style="position:absolute;left:0;top:240px;width:120px;height:14px"><div class="hl" style="left:52px;top:6px;width:8px"></div><span class="sim" style="position:absolute;left:62px;top:0">13:15</span></div>
<div style="position:absolute;left:0;top:254px;width:120px;height:14px"><div class="hl" style="left:52px;top:6px;width:8px"></div><span class="sim" style="position:absolute;left:62px;top:0">13:00</span></div>
<div style="position:absolute;left:0;top:268px;width:120px;height:14px"><div class="hl" style="left:52px;top:6px;width:8px"></div><span class="sim" style="position:absolute;left:62px;top:0">12:45</span></div>
<div style="position:absolute;left:0;top:282px;width:120px;height:14px"><div class="hl" style="left:52px;top:6px;width:8px"></div><span class="sim" style="position:absolute;left:62px;top:0">12:30</span></div>
<div style="position:absolute;left:0;top:296px;width:120px;height:14px"><div class="hl" style="left:52px;top:6px;width:8px"></div><span class="sim" style="position:absolute;left:62px;top:0">12:15</span></div>
<div style="position:absolute;left:0;top:310px;width:120px;height:14px"><div class="hl" style="left:52px;top:6px;width:8px"></div><span class="sim" style="position:absolute;left:62px;top:0">12:00</span></div>
<div style="position:absolute;left:0;top:324px;width:120px;height:14px"><div class="hl" style="left:52px;top:6px;width:8px"></div><span class="sim" style="position:absolute;left:62px;top:0">11:45</span></div>
<div style="position:absolute;left:0;top:338px;width:120px;height:14px"><div class="hl" style="left:52px;top:6px;width:8px"></div><span class="sim" style="position:absolute;left:62px;top:0">11:30</span></div>
<div style="position:absolute;left:0;top:352px;width:120px;height:14px"><div class="hl" style="left:52px;top:6px;width:8px"></div><span class="sim" style="position:absolute;left:62px;top:0">11:15</span></div>
<div style="position:absolute;left:0;top:366px;width:120px;height:14px"><div class="hl" style="left:52px;top:6px;width:8px"></div><span class="sim" style="position:absolute;left:62px;top:0">11:00</span></div>
<div style="position:absolute;left:0;top:380px;width:120px;height:14px"><div class="hl" style="left:52px;top:6px;width:8px"></div><span class="sim" style="position:absolute;left:62px;top:0">10:45</span></div>
<div style="position:absolute;left:0;top:394px;width:120px;height:14px"><div class="box plus" style="left:28px;top:2px"></div><div class="hl" style="left:38px;top:6px;width:4px"></div><span class="sim" style="position:absolute;left:43.5px;top:0">2016-02-26</span></div>
<div style="position:absolute;left:0;top:408px;width:120px;height:14px"><div class="box plus" style="left:28px;top:2px"></div><div class="hl" style="left:38px;top:6px;width:4px"></div><span class="sim" style="position:absolute;left:43.5px;top:0">2016-02-25</span></div>
<div style="position:absolute;left:0;top:422px;width:120px;height:14px"><div class="box plus" style="left:28px;top:2px"></div><div class="hl" style="left:38px;top:6px;width:4px"></div><span class="sim" style="position:absolute;left:43.5px;top:0">2016-02-24</span></div>
<div style="position:absolute;left:0;top:436px;width:120px;height:14px"><div class="box plus" style="left:28px;top:2px"></div><div class="hl" style="left:38px;top:6px;width:4px"></div><span class="sim" style="position:absolute;left:43.5px;top:0">2016-02-23</span></div>
<div style="position:absolute;left:0;top:450px;width:120px;height:14px"><div class="box plus" style="left:28px;top:2px"></div><div class="hl" style="left:38px;top:6px;width:4px"></div><span class="sim" style="position:absolute;left:43.5px;top:0">2016-02-22</span></div>
<div style="position:absolute;left:0;top:464px;width:120px;height:14px"><div class="box plus" style="left:28px;top:2px"></div><div class="hl" style="left:38px;top:6px;width:4px"></div><span class="sim" style="position:absolute;left:43.5px;top:0">2016-02-20</span></div>
<div style="position:absolute;left:0;top:478px;width:120px;height:14px"><div class="box plus" style="left:28px;top:2px"></div><div class="hl" style="left:38px;top:6px;width:4px"></div><span class="sim" style="position:absolute;left:43.5px;top:0">2016-02-19</span></div>
<div style="position:absolute;left:0;top:492px;width:120px;height:14px"><div class="box plus" style="left:28px;top:2px"></div><div class="hl" style="left:38px;top:6px;width:4px"></div><span class="sim" style="position:absolute;left:43.5px;top:0">2016-02-18</span></div>
<div style="position:absolute;left:0;top:506px;width:120px;height:14px"><div class="box plus" style="left:28px;top:2px"></div><div class="hl" style="left:38px;top:6px;width:4px"></div><span class="sim" style="position:absolute;left:43.5px;top:0">2016-02-17</span></div>
<div style="position:absolute;left:0;top:520px;width:120px;height:14px"><div class="box plus" style="left:28px;top:2px"></div><div class="hl" style="left:38px;top:6px;width:4px"></div><span class="sim" style="position:absolute;left:43.5px;top:0">2016-02-02</span></div>
<div style="position:absolute;left:0;top:534px;width:120px;height:14px"><div class="box plus" style="left:28px;top:2px"></div><div class="hl" style="left:38px;top:6px;width:4px"></div><span class="sim" style="position:absolute;left:43.5px;top:0">2016-02-01</span></div>
</div>
<div style="position:absolute;left:298px;top:92px;width:17px;height:543px;background:linear-gradient(90deg,#e4e4e4,#f2f2f2 30%,#f6f6f6)"></div>
<svg style="position:absolute;left:302px;top:98px" width="9" height="6" viewBox="0 0 9 6"><path d="M0.5 5.5 L4.5 0.8 L8.5 5.5Z" fill="#4d5560"/></svg>
<svg style="position:absolute;left:302px;top:624px" width="9" height="6" viewBox="0 0 9 6"><path d="M0.5 0.5 L4.5 5.2 L8.5 0.5Z" fill="#4d5560"/></svg>
<div style="position:absolute;left:299px;top:110px;width:15px;height:410px;border:1px solid #979797;border-radius:2px;background:linear-gradient(90deg,#f4f4f4,#e6e6e6 45%,#cfcfcf 55%,#d8d8d8)"></div>
<div style="position:absolute;left:302px;top:311px;width:8px;height:7px;background:repeating-linear-gradient(180deg,#6a6a6a 0,#6a6a6a 1px,#f4f4f4 1px,#f4f4f4 2px)"></div>

<div style="position:absolute;left:178px;top:642px;width:137px;height:30px;border:1px solid #7c7c7c;border-radius:3px;background:linear-gradient(180deg,#f2f2f2,#ebebeb 48%,#dddddd 52%,#cfcfcf);box-shadow:inset 0 0 0 1px #fcfcfc"></div>
<div style="position:absolute;left:178px;top:679px;width:137px;height:30px;border:1px solid #7c7c7c;border-radius:3px;background:linear-gradient(180deg,#f2f2f2,#ebebeb 48%,#dddddd 52%,#cfcfcf);box-shadow:inset 0 0 0 1px #fcfcfc"></div>
<svg style="position:absolute;left:211px;top:643px" width="24" height="29" viewBox="0 0 24 26" preserveAspectRatio="none"><path d="M3 10 C5 3 14 1.5 18 6 L21 3.5 L21.5 12.5 L12.5 11.5 L15.5 8.8 C12.5 6 8 7 6.5 11Z" fill="#2fa4e8"/><path d="M21 15.5 C19 22.5 10 24 6 19.5 L3 22 L2.5 13 L11.5 14 L8.5 16.7 C11.5 19.5 16 18.5 17.5 14.5Z" fill="#2fa4e8"/></svg>
<div class="sim" style="position:absolute;left:236px;top:651px">Refresh</div>
<svg style="position:absolute;left:190px;top:680px" width="28" height="27" viewBox="0 0 28 27"><path d="M11 2 L13 3 L10 16 L8 15Z" fill="#b98a52"/><path d="M4 24 C4 18 6 15 9 14.5 L12 16 C13 19 12 23 11 25 Z" fill="#c9a36a" stroke="#9a7440" stroke-width=".6"/><path d="M9 12 L19 22 M19 12 L9 22" stroke="#e3261a" stroke-width="3.4" stroke-linecap="round"/></svg>
<div class="sim" style="position:absolute;left:215px;top:688px">Clear All Data</div>
<svg class="chart" style="position:absolute;left:323px;top:92px" width="1109" height="306" viewBox="0 0 1109 306">
<rect x="0" y="0" width="1109" height="306" fill="#000"/>
<text x="543.5" y="36" text-anchor="middle" style="font-size:24px;font-weight:bold;fill:#0c7cf2" id="t1">Peak History Data</text>
<path d="M92.5 239.6H1079.5M92.5 218.7H1079.5M92.5 197.8H1079.5M92.5 176.9H1079.5M92.5 156.0H1079.5M92.5 135.1H1079.5M92.5 114.2H1079.5M92.5 93.3H1079.5M92.5 72.4H1079.5M92.5 51.5H1079.5M97.5 51.5V260.5M151.8 51.5V260.5M206.2 51.5V260.5M260.5 51.5V260.5M314.8 51.5V260.5M369.2 51.5V260.5M423.5 51.5V260.5M477.8 51.5V260.5M532.2 51.5V260.5M586.5 51.5V260.5M640.8 51.5V260.5M695.2 51.5V260.5M749.5 51.5V260.5M803.8 51.5V260.5M858.2 51.5V260.5M912.5 51.5V260.5M966.8 51.5V260.5M1021.2 51.5V260.5M1075.5 51.5V260.5M1079.5 51.5V260.5" stroke="#b8b8b8" stroke-width="1" stroke-dasharray="3 1" fill="none" shape-rendering="crispEdges"/>
<polyline points="97.5,156.0 100.2,154.2 102.9,152.4 105.7,150.5 108.4,148.7 111.1,146.9 113.8,145.1 116.5,143.3 119.2,141.5 122.0,139.7 124.7,137.9 127.4,136.1 130.1,134.3 132.8,132.5 135.5,130.7 138.2,129.0 141.0,127.2 143.7,125.4 146.4,123.7 149.1,122.0 151.8,120.3 154.6,118.6 157.3,116.9 160.0,115.2 162.7,113.5 165.4,111.8 168.1,110.2 170.8,108.6 173.6,106.9 176.3,105.3 179.0,103.8 181.7,102.2 184.4,100.6 187.2,99.1 189.9,97.6 192.6,96.1 195.3,94.6 198.0,93.1 200.7,91.7 203.4,90.2 206.2,88.8 208.9,87.4 211.6,86.1 214.3,84.7 217.0,83.4 219.8,82.1 222.5,80.8 225.2,79.6 227.9,78.3 230.6,77.1 233.3,75.9 236.1,74.8 238.8,73.7 241.5,72.5 244.2,71.5 246.9,70.4 249.6,69.4 252.3,68.4 255.1,67.4 257.8,66.4 260.5,65.5 263.2,64.6 265.9,63.7 268.6,62.9 271.4,62.1 274.1,61.3 276.8,60.5 279.5,59.8 282.2,59.1 284.9,58.4 287.7,57.8 290.4,57.2 293.1,56.6 295.8,56.1 298.5,55.5 301.2,55.1 304.0,54.6 306.7,54.2 309.4,53.8 312.1,53.4 314.8,53.1 317.6,52.8 320.3,52.5 323.0,52.3 325.7,52.1 328.4,51.9 331.1,51.8 333.9,51.6 336.6,51.6 339.3,51.5 342.0,51.5 344.7,51.5 347.4,51.6 350.1,51.6 352.9,51.8 355.6,51.9 358.3,52.1 361.0,52.3 363.7,52.5 366.4,52.8 369.2,53.1 371.9,53.4 374.6,53.8 377.3,54.2 380.0,54.6 382.8,55.1 385.5,55.5 388.2,56.1 390.9,56.6 393.6,57.2 396.3,57.8 399.1,58.4 401.8,59.1 404.5,59.8 407.2,60.5 409.9,61.3 412.6,62.1 415.4,62.9 418.1,63.7 420.8,64.6 423.5,65.5 426.2,66.4 428.9,67.4 431.6,68.4 434.4,69.4 437.1,70.4 439.8,71.5 442.5,72.5 445.2,73.7 447.9,74.8 450.7,75.9 453.4,77.1 456.1,78.3 458.8,79.6 461.5,80.8 464.2,82.1 467.0,83.4 469.7,84.7 472.4,86.1 475.1,87.4 477.8,88.8 480.6,90.2 483.3,91.7 486.0,93.1 488.7,94.6 491.4,96.1 494.1,97.6 496.9,99.1 499.6,100.6 502.3,102.2 505.0,103.8 507.7,105.3 510.4,106.9 513.1,108.6 515.9,110.2 518.6,111.8 521.3,113.5 524.0,115.2 526.7,116.9 529.5,118.6 532.2,120.3 534.9,122.0 537.6,123.7 540.3,125.4 543.0,127.2 545.8,129.0 548.5,130.7 551.2,132.5 553.9,134.3 556.6,136.1 559.3,137.9 562.0,139.7 564.8,141.5 567.5,143.3 570.2,145.1 572.9,146.9 575.6,148.7 578.4,150.5 581.1,152.4 583.8,154.2 586.5,156.0 589.2,157.8 591.9,159.6 594.6,161.5 597.4,163.3 600.1,165.1 602.8,166.9 605.5,168.7 608.2,170.5 611.0,172.3 613.7,174.1 616.4,175.9 619.1,177.7 621.8,179.5 624.5,181.3 627.2,183.0 630.0,184.8 632.7,186.6 635.4,188.3 638.1,190.0 640.8,191.7 643.5,193.4 646.3,195.1 649.0,196.8 651.7,198.5 654.4,200.2 657.1,201.8 659.9,203.4 662.6,205.1 665.3,206.7 668.0,208.2 670.7,209.8 673.4,211.4 676.1,212.9 678.9,214.4 681.6,215.9 684.3,217.4 687.0,218.9 689.7,220.3 692.5,221.8 695.2,223.2 697.9,224.6 700.6,225.9 703.3,227.3 706.0,228.6 708.8,229.9 711.5,231.2 714.2,232.4 716.9,233.7 719.6,234.9 722.3,236.1 725.0,237.2 727.8,238.3 730.5,239.5 733.2,240.5 735.9,241.6 738.6,242.6 741.4,243.6 744.1,244.6 746.8,245.6 749.5,246.5 752.2,247.4 754.9,248.3 757.6,249.1 760.4,249.9 763.1,250.7 765.8,251.5 768.5,252.2 771.2,252.9 774.0,253.6 776.7,254.2 779.4,254.8 782.1,255.4 784.8,255.9 787.5,256.5 790.2,256.9 793.0,257.4 795.7,257.8 798.4,258.2 801.1,258.6 803.8,258.9 806.5,259.2 809.3,259.5 812.0,259.7 814.7,259.9 817.4,260.1 820.1,260.2 822.9,260.4 825.6,260.4 828.3,260.5 831.0,260.5 833.7,260.5 836.4,260.4 839.1,260.4 841.9,260.2 844.6,260.1 847.3,259.9 850.0,259.7 852.7,259.5 855.5,259.2 858.2,258.9 860.9,258.6 863.6,258.2 866.3,257.8 869.0,257.4 871.8,256.9 874.5,256.5 877.2,255.9 879.9,255.4 882.6,254.8 885.3,254.2 888.0,253.6 890.8,252.9 893.5,252.2 896.2,251.5 898.9,250.7 901.6,249.9 904.4,249.1 907.1,248.3 909.8,247.4 912.5,246.5 915.2,245.6 917.9,244.6 920.6,243.6 923.4,242.6 926.1,241.6 928.8,240.5 931.5,239.5 934.2,238.3 937.0,237.2 939.7,236.1 942.4,234.9 945.1,233.7 947.8,232.4 950.5,231.2 953.2,229.9 956.0,228.6 958.7,227.3 961.4,225.9 964.1,224.6 966.8,223.2 969.5,221.8 972.3,220.3 975.0,218.9 977.7,217.4 980.4,215.9 983.1,214.4 985.9,212.9 988.6,211.4 991.3,209.8 994.0,208.3 996.7,206.7 999.4,205.1 1002.1,203.4 1004.9,201.8 1007.6,200.2 1010.3,198.5 1013.0,196.8 1015.7,195.1 1018.5,193.4 1021.2,191.7 1023.9,190.0 1026.6,188.3 1029.3,186.6 1032.0,184.8 1034.8,183.0 1037.5,181.3 1040.2,179.5 1042.9,177.7 1045.6,175.9 1048.3,174.1 1051.0,172.3 1053.8,170.5 1056.5,168.7 1059.2,166.9 1061.9,165.1 1064.6,163.3 1067.3,161.5 1070.1,159.6 1072.8,157.8" fill="none" stroke="#0aad0a" stroke-width="2.4"/>
<path d="M93.0 51.5V261.0" stroke="#8c8c8c" stroke-width="1.6"/>
<path d="M92.5 260.5H1079.5" stroke="#8c8c8c" stroke-width="1.6"/>
<path d="M87.0 260.5H93.5M89.5 255.3H92.5M89.5 250.1H92.5M89.5 244.8H92.5M87.0 239.6H93.5M89.5 234.4H92.5M89.5 229.2H92.5M89.5 223.9H92.5M87.0 218.7H93.5M89.5 213.5H92.5M89.5 208.2H92.5M89.5 203.0H92.5M87.0 197.8H93.5M89.5 192.6H92.5M89.5 187.3H92.5M89.5 182.1H92.5M87.0 176.9H93.5M89.5 171.7H92.5M89.5 166.4H92.5M89.5 161.2H92.5M87.0 156.0H93.5M89.5 150.8H92.5M89.5 145.6H92.5M89.5 140.3H92.5M87.0 135.1H93.5M89.5 129.9H92.5M89.5 124.7H92.5M89.5 119.4H92.5M87.0 114.2H93.5M89.5 109.0H92.5M89.5 103.8H92.5M89.5 98.5H92.5M87.0 93.3H93.5M89.5 88.1H92.5M89.5 82.8H92.5M89.5 77.6H92.5M87.0 72.4H93.5M89.5 67.2H92.5M89.5 61.9H92.5M89.5 56.7H92.5M87.0 51.5H93.5M97.5 260.5V265.5M111.1 260.5V263.5M124.7 260.5V263.5M138.2 260.5V263.5M151.8 260.5V265.5M165.4 260.5V263.5M179.0 260.5V263.5M192.6 260.5V263.5M206.2 260.5V265.5M219.8 260.5V263.5M233.3 260.5V263.5M246.9 260.5V263.5M260.5 260.5V265.5M274.1 260.5V263.5M287.7 260.5V263.5M301.2 260.5V263.5M314.8 260.5V265.5M328.4 260.5V263.5M342.0 260.5V263.5M355.6 260.5V263.5M369.2 260.5V265.5M382.8 260.5V263.5M396.3 260.5V263.5M409.9 260.5V263.5M423.5 260.5V265.5M437.1 260.5V263.5M450.7 260.5V263.5M464.2 260.5V263.5M477.8 260.5V265.5M491.4 260.5V263.5M505.0 260.5V263.5M518.6 260.5V263.5M532.2 260.5V265.5M545.8 260.5V263.5M559.3 260.5V263.5M572.9 260.5V263.5M586.5 260.5V265.5M600.1 260.5V263.5M613.7 260.5V263.5M627.2 260.5V263.5M640.8 260.5V265.5M654.4 260.5V263.5M668.0 260.5V263.5M681.6 260.5V263.5M695.2 260.5V265.5M708.8 260.5V263.5M722.3 260.5V263.5M735.9 260.5V263.5M749.5 260.5V265.5M763.1 260.5V263.5M776.7 260.5V263.5M790.2 260.5V263.5M803.8 260.5V265.5M817.4 260.5V263.5M831.0 260.5V263.5M844.6 260.5V263.5M858.2 260.5V265.5M871.8 260.5V263.5M885.3 260.5V263.5M898.9 260.5V263.5M912.5 260.5V265.5M926.1 260.5V263.5M939.7 260.5V263.5M953.2 260.5V263.5M966.8 260.5V265.5M980.4 260.5V263.5M994.0 260.5V263.5M1007.6 260.5V263.5M1021.2 260.5V265.5M1034.8 260.5V263.5M1048.3 260.5V263.5M1061.9 260.5V263.5M1075.5 260.5V265.5" stroke="#c8c8c8" stroke-width="1" fill="none"/>
<polygon points="97.5,260.5 97.5,248.2 112.8,246.5 128.1,260.5 143.3,247.9 158.6,247.9 173.9,247.9 189.2,248.5 204.5,247.9 219.8,248.8 235.0,260.5 250.3,250.1 265.6,260.5 280.9,260.5 296.2,248.8 311.4,260.5 326.7,260.5 342.0,260.5 357.3,248.8 372.6,250.1 387.8,260.5 403.1,248.2 418.4,249.2 433.7,260.5 449.0,248.8 464.2,244.0 479.5,247.4 494.8,260.5 510.1,245.0 525.4,247.9 540.7,247.9 555.9,260.5 571.2,246.0 586.5,260.5 601.8,260.5 617.1,260.5 632.3,247.9 647.6,260.5 662.9,260.5 678.2,247.9 693.5,247.9 708.8,260.5 724.0,248.8 739.3,250.5 754.6,260.5 769.9,247.2 785.2,247.2 800.4,260.5 815.7,260.5 831.0,260.5 846.3,260.5 861.6,260.5 876.8,247.2 892.1,248.8 907.4,260.5 922.7,260.5 938.0,245.9 953.2,247.9 968.5,247.9 983.8,260.5 999.1,260.5 1014.4,260.5 1029.7,248.8 1044.9,260.5 1060.2,247.9 1060.2,260.5" fill="#fb0505" stroke="#b06060" stroke-width=".6"/>
<path d="M99.0 197.8H1075.5" stroke="#e8101a" stroke-width="2.5" stroke-dasharray="2.5 5.5" stroke-linecap="round"/>
<text x="82.5" y="263.7" text-anchor="end">0</text>
<text x="82.5" y="242.8" text-anchor="end">200</text>
<text x="82.5" y="221.9" text-anchor="end">400</text>
<text x="82.5" y="201.0" text-anchor="end">600</text>
<text x="82.5" y="180.1" text-anchor="end">800</text>
<text x="82.5" y="159.2" text-anchor="end">1,000</text>
<text x="82.5" y="138.3" text-anchor="end">1,200</text>
<text x="82.5" y="117.4" text-anchor="end">1,400</text>
<text x="82.5" y="96.5" text-anchor="end">1,600</text>
<text x="82.5" y="75.6" text-anchor="end">1,800</text>
<text x="82.5" y="54.7" text-anchor="end">2,000</text>
<text x="97.5" y="277.7" text-anchor="middle">0</text>
<text x="151.8" y="277.7" text-anchor="middle">20</text>
<text x="206.2" y="277.7" text-anchor="middle">40</text>
<text x="260.5" y="277.7" text-anchor="middle">60</text>
<text x="314.8" y="277.7" text-anchor="middle">80</text>
<text x="369.2" y="277.7" text-anchor="middle">100</text>
<text x="423.5" y="277.7" text-anchor="middle">120</text>
<text x="477.8" y="277.7" text-anchor="middle">140</text>
<text x="532.2" y="277.7" text-anchor="middle">160</text>
<text x="586.5" y="277.7" text-anchor="middle">180</text>
<text x="640.8" y="277.7" text-anchor="middle">200</text>
<text x="695.2" y="277.7" text-anchor="middle">220</text>
<text x="749.5" y="277.7" text-anchor="middle">240</text>
<text x="803.8" y="277.7" text-anchor="middle">260</text>
<text x="858.2" y="277.7" text-anchor="middle">280</text>
<text x="912.5" y="277.7" text-anchor="middle">300</text>
<text x="966.8" y="277.7" text-anchor="middle">320</text>
<text x="1021.2" y="277.7" text-anchor="middle">340</text>
<text x="1075.5" y="277.7" text-anchor="middle">360</text>
<text x="585.5" y="290.5" text-anchor="middle" style="font-size:11.3px">Phase(°)</text>
<text transform="translate(42.2,155.0) rotate(-90)" text-anchor="middle" style="font-size:11.3px">Amplitude(mV)</text>
</svg>
<div style="position:absolute;left:322px;top:92px;width:1px;height:618px;background:#fff"></div><div style="position:absolute;left:322px;top:709px;width:1110px;height:1px;background:#fff"></div>
<div style="position:absolute;left:323px;top:398px;width:1109px;height:6px;background:#f4f4f4;border-top:1px solid #d0d0d0"></div>
<div style="position:absolute;left:323px;top:404px;width:1109px;height:305px;background:#000"></div>
<div id="wm" style="position:absolute;left:364.5px;top:383px;white-space:nowrap;font-family:'Noto Serif CJK SC','Liberation Serif',serif;font-size:46px;font-weight:400;letter-spacing:7.8px;line-height:64px;color:#c4c4c4;-webkit-text-stroke:1.3px #c4c4c4;opacity:.8;transform:skewX(-10deg);transform-origin:0 100%;text-shadow:1.4px 1.4px 1px #555,-0.7px -0.7px 0 #e8e8e8">江苏海立普电力科技有限公司</div>
<svg class="chart" style="position:absolute;left:323px;top:404px" width="1109" height="305" viewBox="0 0 1109 305">
<text x="543.5" y="36" text-anchor="middle" style="font-size:23.7px;font-weight:bold;fill:#0c7cf2;fill-opacity:.86" id="t2">Discharge Rate</text>
<path d="M75.5 238.7H1079.5M75.5 217.9H1079.5M75.5 197.1H1079.5M75.5 176.3H1079.5M75.5 155.5H1079.5M75.5 134.7H1079.5M75.5 113.9H1079.5M75.5 93.1H1079.5M75.5 72.3H1079.5M75.5 51.5H1079.5M80.5 51.5V259.5M135.8 51.5V259.5M191.1 51.5V259.5M246.3 51.5V259.5M301.6 51.5V259.5M356.9 51.5V259.5M412.2 51.5V259.5M467.4 51.5V259.5M522.7 51.5V259.5M578.0 51.5V259.5M633.3 51.5V259.5M688.6 51.5V259.5M743.8 51.5V259.5M799.1 51.5V259.5M854.4 51.5V259.5M909.7 51.5V259.5M964.9 51.5V259.5M1020.2 51.5V259.5M1075.5 51.5V259.5M1079.5 51.5V259.5" stroke="#b8b8b8" stroke-width="1" stroke-dasharray="3 1" fill="none" shape-rendering="crispEdges"/>
<path d="M76.0 51.5V260.0" stroke="#8c8c8c" stroke-width="1.6"/>
<path d="M75.5 259.5H1079.5" stroke="#8c8c8c" stroke-width="1.6"/>
<polyline points="80.5,155.5 83.3,153.7 86.0,151.9 88.8,150.1 91.6,148.2 94.3,146.4 97.1,144.6 99.8,142.8 102.6,141.0 105.4,139.2 108.1,137.4 110.9,135.7 113.7,133.9 116.4,132.1 119.2,130.3 122.0,128.6 124.7,126.8 127.5,125.1 130.2,123.4 133.0,121.6 135.8,119.9 138.5,118.2 141.3,116.5 144.1,114.9 146.8,113.2 149.6,111.5 152.4,109.9 155.1,108.3 157.9,106.7 160.7,105.1 163.4,103.5 166.2,101.9 168.9,100.4 171.7,98.9 174.5,97.3 177.2,95.8 180.0,94.4 182.8,92.9 185.5,91.5 188.3,90.1 191.1,88.7 193.8,87.3 196.6,85.9 199.3,84.6 202.1,83.3 204.9,82.0 207.6,80.7 210.4,79.4 213.2,78.2 215.9,77.0 218.7,75.8 221.5,74.7 224.2,73.5 227.0,72.4 229.8,71.4 232.5,70.3 235.3,69.3 238.0,68.3 240.8,67.3 243.6,66.4 246.3,65.4 249.1,64.5 251.9,63.7 254.6,62.8 257.4,62.0 260.2,61.2 262.9,60.5 265.7,59.8 268.4,59.1 271.2,58.4 274.0,57.8 276.7,57.2 279.5,56.6 282.3,56.0 285.0,55.5 287.8,55.0 290.6,54.6 293.3,54.2 296.1,53.8 298.8,53.4 301.6,53.1 304.4,52.8 307.1,52.5 309.9,52.3 312.7,52.1 315.4,51.9 318.2,51.8 321.0,51.6 323.7,51.6 326.5,51.5 329.2,51.5 332.0,51.5 334.8,51.6 337.5,51.6 340.3,51.8 343.1,51.9 345.8,52.1 348.6,52.3 351.4,52.5 354.1,52.8 356.9,53.1 359.7,53.4 362.4,53.8 365.2,54.2 367.9,54.6 370.7,55.0 373.5,55.5 376.2,56.0 379.0,56.6 381.8,57.2 384.5,57.8 387.3,58.4 390.1,59.1 392.8,59.8 395.6,60.5 398.3,61.2 401.1,62.0 403.9,62.8 406.6,63.7 409.4,64.5 412.2,65.4 414.9,66.4 417.7,67.3 420.5,68.3 423.2,69.3 426.0,70.3 428.8,71.4 431.5,72.4 434.3,73.5 437.0,74.7 439.8,75.8 442.6,77.0 445.3,78.2 448.1,79.4 450.9,80.7 453.6,82.0 456.4,83.3 459.2,84.6 461.9,85.9 464.7,87.3 467.4,88.7 470.2,90.1 473.0,91.5 475.7,92.9 478.5,94.4 481.3,95.8 484.0,97.3 486.8,98.9 489.6,100.4 492.3,101.9 495.1,103.5 497.8,105.1 500.6,106.7 503.4,108.3 506.1,109.9 508.9,111.5 511.7,113.2 514.4,114.9 517.2,116.5 520.0,118.2 522.7,119.9 525.5,121.6 528.2,123.4 531.0,125.1 533.8,126.8 536.5,128.6 539.3,130.3 542.1,132.1 544.8,133.9 547.6,135.7 550.4,137.4 553.1,139.2 555.9,141.0 558.7,142.8 561.4,144.6 564.2,146.4 566.9,148.2 569.7,150.1 572.5,151.9 575.2,153.7 578.0,155.5 580.8,157.3 583.5,159.1 586.3,160.9 589.1,162.8 591.8,164.6 594.6,166.4 597.3,168.2 600.1,170.0 602.9,171.8 605.6,173.6 608.4,175.3 611.2,177.1 613.9,178.9 616.7,180.7 619.5,182.4 622.2,184.2 625.0,185.9 627.8,187.6 630.5,189.4 633.3,191.1 636.0,192.8 638.8,194.5 641.6,196.1 644.3,197.8 647.1,199.5 649.9,201.1 652.6,202.7 655.4,204.3 658.2,205.9 660.9,207.5 663.7,209.1 666.4,210.6 669.2,212.1 672.0,213.7 674.7,215.2 677.5,216.6 680.3,218.1 683.0,219.5 685.8,220.9 688.6,222.3 691.3,223.7 694.1,225.1 696.8,226.4 699.6,227.7 702.4,229.0 705.1,230.3 707.9,231.6 710.7,232.8 713.4,234.0 716.2,235.2 719.0,236.3 721.7,237.5 724.5,238.6 727.2,239.6 730.0,240.7 732.8,241.7 735.5,242.7 738.3,243.7 741.1,244.6 743.8,245.6 746.6,246.5 749.4,247.3 752.1,248.2 754.9,249.0 757.7,249.8 760.4,250.5 763.2,251.2 765.9,251.9 768.7,252.6 771.5,253.2 774.2,253.8 777.0,254.4 779.8,255.0 782.5,255.5 785.3,256.0 788.1,256.4 790.8,256.8 793.6,257.2 796.3,257.6 799.1,257.9 801.9,258.2 804.6,258.5 807.4,258.7 810.2,258.9 812.9,259.1 815.7,259.2 818.5,259.4 821.2,259.4 824.0,259.5 826.8,259.5 829.5,259.5 832.3,259.4 835.0,259.4 837.8,259.2 840.6,259.1 843.3,258.9 846.1,258.7 848.9,258.5 851.6,258.2 854.4,257.9 857.2,257.6 859.9,257.2 862.7,256.8 865.4,256.4 868.2,256.0 871.0,255.5 873.7,255.0 876.5,254.4 879.3,253.8 882.0,253.2 884.8,252.6 887.6,251.9 890.3,251.2 893.1,250.5 895.8,249.8 898.6,249.0 901.4,248.2 904.1,247.3 906.9,246.5 909.7,245.6 912.4,244.6 915.2,243.7 918.0,242.7 920.7,241.7 923.5,240.7 926.2,239.6 929.0,238.6 931.8,237.5 934.5,236.3 937.3,235.2 940.1,234.0 942.8,232.8 945.6,231.6 948.4,230.3 951.1,229.0 953.9,227.7 956.7,226.4 959.4,225.1 962.2,223.7 964.9,222.3 967.7,220.9 970.5,219.5 973.2,218.1 976.0,216.6 978.8,215.2 981.5,213.7 984.3,212.1 987.1,210.6 989.8,209.1 992.6,207.5 995.3,205.9 998.1,204.3 1000.9,202.7 1003.6,201.1 1006.4,199.5 1009.2,197.8 1011.9,196.1 1014.7,194.5 1017.5,192.8 1020.2,191.1 1023.0,189.4 1025.8,187.6 1028.5,185.9 1031.3,184.2 1034.0,182.4 1036.8,180.7 1039.6,178.9 1042.3,177.1 1045.1,175.3 1047.9,173.6 1050.6,171.8 1053.4,170.0 1056.2,168.2 1058.9,166.4 1061.7,164.6 1064.4,162.8 1067.2,160.9 1070.0,159.1 1072.7,157.3" fill="none" stroke="#0aad0a" stroke-width="2.4"/>
<path d="M70.0 259.5H76.5M72.5 255.3H75.5M72.5 251.2H75.5M72.5 247.0H75.5M72.5 242.9H75.5M70.0 238.7H76.5M72.5 234.5H75.5M72.5 230.4H75.5M72.5 226.2H75.5M72.5 222.1H75.5M70.0 217.9H76.5M72.5 213.7H75.5M72.5 209.6H75.5M72.5 205.4H75.5M72.5 201.3H75.5M70.0 197.1H76.5M72.5 192.9H75.5M72.5 188.8H75.5M72.5 184.6H75.5M72.5 180.5H75.5M70.0 176.3H76.5M72.5 172.1H75.5M72.5 168.0H75.5M72.5 163.8H75.5M72.5 159.7H75.5M70.0 155.5H76.5M72.5 151.3H75.5M72.5 147.2H75.5M72.5 143.0H75.5M72.5 138.9H75.5M70.0 134.7H76.5M72.5 130.5H75.5M72.5 126.4H75.5M72.5 122.2H75.5M72.5 118.1H75.5M70.0 113.9H76.5M72.5 109.7H75.5M72.5 105.6H75.5M72.5 101.4H75.5M72.5 97.3H75.5M70.0 93.1H76.5M72.5 88.9H75.5M72.5 84.8H75.5M72.5 80.6H75.5M72.5 76.5H75.5M70.0 72.3H76.5M72.5 68.1H75.5M72.5 64.0H75.5M72.5 59.8H75.5M72.5 55.7H75.5M70.0 51.5H76.5M80.5 259.5V264.5M94.3 259.5V262.5M108.1 259.5V262.5M122.0 259.5V262.5M135.8 259.5V264.5M149.6 259.5V262.5M163.4 259.5V262.5M177.2 259.5V262.5M191.1 259.5V264.5M204.9 259.5V262.5M218.7 259.5V262.5M232.5 259.5V262.5M246.3 259.5V264.5M260.2 259.5V262.5M274.0 259.5V262.5M287.8 259.5V262.5M301.6 259.5V264.5M315.4 259.5V262.5M329.2 259.5V262.5M343.1 259.5V262.5M356.9 259.5V264.5M370.7 259.5V262.5M384.5 259.5V262.5M398.3 259.5V262.5M412.2 259.5V264.5M426.0 259.5V262.5M439.8 259.5V262.5M453.6 259.5V262.5M467.4 259.5V264.5M481.3 259.5V262.5M495.1 259.5V262.5M508.9 259.5V262.5M522.7 259.5V264.5M536.5 259.5V262.5M550.4 259.5V262.5M564.2 259.5V262.5M578.0 259.5V264.5M591.8 259.5V262.5M605.6 259.5V262.5M619.5 259.5V262.5M633.3 259.5V264.5M647.1 259.5V262.5M660.9 259.5V262.5M674.7 259.5V262.5M688.6 259.5V264.5M702.4 259.5V262.5M716.2 259.5V262.5M730.0 259.5V262.5M743.8 259.5V264.5M757.7 259.5V262.5M771.5 259.5V262.5M785.3 259.5V262.5M799.1 259.5V264.5M812.9 259.5V262.5M826.8 259.5V262.5M840.6 259.5V262.5M854.4 259.5V264.5M868.2 259.5V262.5M882.0 259.5V262.5M895.8 259.5V262.5M909.7 259.5V264.5M923.5 259.5V262.5M937.3 259.5V262.5M951.1 259.5V262.5M964.9 259.5V264.5M978.8 259.5V262.5M992.6 259.5V262.5M1006.4 259.5V262.5M1020.2 259.5V264.5M1034.0 259.5V262.5M1047.9 259.5V262.5M1061.7 259.5V262.5M1075.5 259.5V264.5" stroke="#c8c8c8" stroke-width="1" fill="none"/>
<text x="65.5" y="262.7" text-anchor="end">0</text>
<text x="65.5" y="241.9" text-anchor="end">5</text>
<text x="65.5" y="221.1" text-anchor="end">10</text>
<text x="65.5" y="200.3" text-anchor="end">15</text>
<text x="65.5" y="179.5" text-anchor="end">20</text>
<text x="65.5" y="158.7" text-anchor="end">25</text>
<text x="65.5" y="137.9" text-anchor="end">30</text>
<text x="65.5" y="117.1" text-anchor="end">35</text>
<text x="65.5" y="96.3" text-anchor="end">40</text>
<text x="65.5" y="75.5" text-anchor="end">45</text>
<text x="65.5" y="54.7" text-anchor="end">50</text>
<text x="80.5" y="276.7" text-anchor="middle">0</text>
<text x="135.8" y="276.7" text-anchor="middle">20</text>
<text x="191.1" y="276.7" text-anchor="middle">40</text>
<text x="246.3" y="276.7" text-anchor="middle">60</text>
<text x="301.6" y="276.7" text-anchor="middle">80</text>
<text x="356.9" y="276.7" text-anchor="middle">100</text>
<text x="412.2" y="276.7" text-anchor="middle">120</text>
<text x="467.4" y="276.7" text-anchor="middle">140</text>
<text x="522.7" y="276.7" text-anchor="middle">160</text>
<text x="578.0" y="276.7" text-anchor="middle">180</text>
<text x="633.3" y="276.7" text-anchor="middle">200</text>
<text x="688.6" y="276.7" text-anchor="middle">220</text>
<text x="743.8" y="276.7" text-anchor="middle">240</text>
<text x="799.1" y="276.7" text-anchor="middle">260</text>
<text x="854.4" y="276.7" text-anchor="middle">280</text>
<text x="909.7" y="276.7" text-anchor="middle">300</text>
<text x="964.9" y="276.7" text-anchor="middle">320</text>
<text x="1020.2" y="276.7" text-anchor="middle">340</text>
<text x="1075.5" y="276.7" text-anchor="middle">360</text>
<text x="576.5" y="290.5" text-anchor="middle" style="font-size:11.3px">Phase(°)</text>
<text transform="translate(42.5,155.0) rotate(-90)" text-anchor="middle" style="font-size:11.5px">Discharge Rate(Time/sec)</text>
</svg>
<div style="position:absolute;left:0;top:720px;width:1435px;height:21px;background:linear-gradient(180deg,rgba(240,243,247,1) 0,rgba(240,243,247,0) 40%),linear-gradient(90deg,#d3e2f4,#d9e6f5 60%,#dfe9f6);border-bottom:1px solid #76828f"></div>
<div class="ui" style="position:absolute;left:3px;top:725.8px;font-size:13px;letter-spacing:.25px;color:#1a1a1a">Prompt</div>
<svg style="position:absolute;left:1405px;top:726px" width="10" height="12" viewBox="0 0 10 12"><path d="M2.5 1.5 H7.5 M3 1.5 V7 M7 1.5 V7 M6 1.5 V7 M1 7.2 H9 M5 7.5 V11" stroke="#000" stroke-width="1.2" fill="none"/></svg>
<svg style="position:absolute;left:1421px;top:727px" width="11" height="10" viewBox="0 0 11 10"><path d="M1.5 1 L9.5 9 M9.5 1 L1.5 9" stroke="#000" stroke-width="1.5"/></svg>
<div style="position:absolute;left:0;top:741px;width:1435px;height:91px;background:#fff;border-bottom:1px solid #b4b8bd"></div>
<div id="log" style="position:absolute;left:0;top:742px;width:1418px;height:89px;overflow:hidden">
<div class="sim" style="position:absolute;left:0px;top:2.5px">[2016-04-25 15:51:37]:Listen Failed!</div>
<div class="sim" style="position:absolute;left:0px;top:18.5px">[2016-04-25 15:51:37]:Open Success!,COM1,38400,8,1,None</div>
<div class="sim" style="position:absolute;left:0px;top:34.5px">[2016-04-25 15:51:44]:Listen Failed!</div>
<div class="sim" style="position:absolute;left:0px;top:50.5px">[2016-04-25 15:51:54]:Listen Failed!</div>
<div class="sim" style="position:absolute;left:0px;top:66.5px">[2016-04-25 15:52:04]:Listen Failed!</div>
<div class="sim" style="position:absolute;left:0px;top:82.5px">[2016-04-25 15:52:14]:Listen Failed!</div>
</div>
<div style="position:absolute;left:1418px;top:742px;width:17px;height:89px;background:linear-gradient(90deg,#e4e4e4,#f2f2f2 30%,#f6f6f6)"></div>
<svg style="position:absolute;left:1422px;top:748px" width="9" height="6" viewBox="0 0 9 6"><path d="M0.5 5.5 L4.5 0.8 L8.5 5.5Z" fill="#4d5560"/></svg>
<svg style="position:absolute;left:1422px;top:818px" width="9" height="6" viewBox="0 0 9 6"><path d="M0.5 0.5 L4.5 5.2 L8.5 0.5Z" fill="#4d5560"/></svg>
<div style="position:absolute;left:1419px;top:760px;width:15px;height:24px;border:1px solid #979797;border-radius:2px;background:linear-gradient(90deg,#f4f4f4,#e6e6e6 45%,#cfcfcf 55%,#d8d8d8)"></div>
<div style="position:absolute;left:1422px;top:768px;width:8px;height:7px;background:repeating-linear-gradient(180deg,#6a6a6a 0,#6a6a6a 1px,#f4f4f4 1px,#f4f4f4 2px)"></div>

<div style="position:absolute;left:0;top:832px;width:1435px;height:25px;background:#f0f0f0"></div>
<div style="position:absolute;left:-1px;top:837px;width:15px;height:15px;border-radius:50%;background:#f80d0d"></div>
<div style="position:absolute;left:143px;top:837px;width:16px;height:16px;border-radius:50%;background:#0cf00c"></div>
<div style="position:absolute;left:544px;top:834px;width:666px;height:22px;border:1px solid #a0a0a0;border-right-color:#fff;border-bottom-color:#fff;background:#f0f0f0"></div>
<div style="position:absolute;left:1212px;top:834px;width:17px;height:22px;border:1px solid #a0a0a0;border-right-color:#fff;border-bottom-color:#fff;background:#f0f0f0"></div>

<div class="ui" style="position:absolute;left:17.3px;top:837.9px;letter-spacing:0.358px;color:#111">Local Port :</div>
<div class="ui" style="position:absolute;left:95px;top:837.9px;letter-spacing:0.263px;color:#111">Close</div>
<div class="ui" style="position:absolute;left:135.2px;top:837.9px;letter-spacing:0.000px;color:#111">|</div>
<div class="ui" style="position:absolute;left:161.8px;top:837.9px;letter-spacing:0.650px;color:#111">Upload Port :</div>
<div class="ui" style="position:absolute;left:252.8px;top:837.9px;letter-spacing:0.557px;color:#111">COM1 38400 8 1 None</div>
<div class="ui" style="position:absolute;left:394.7px;top:837.9px;letter-spacing:0.000px;color:#111">|</div>
<div class="ui" style="position:absolute;left:424px;top:837.9px;letter-spacing:0.402px;color:#111">Connected Device</div>
<div class="ui" style="position:absolute;left:1217.2px;top:837.9px;letter-spacing:0.000px;color:#111">0</div>
<div class="ui" style="position:absolute;left:1233.7px;top:837.9px;letter-spacing:0.362px;color:#111">Clear</div>
<div class="ui" style="position:absolute;left:1272.2px;top:837.9px;letter-spacing:0.000px;color:#111">|</div>
<div class="ui" style="position:absolute;left:1284.5px;top:837.9px;letter-spacing:0.420px;color:#111">Display</div>
<div class="ui" style="position:absolute;left:1345.8px;top:837.9px;letter-spacing:0.000px;color:#111">|</div>
<div class="ui" style="position:absolute;left:1359.2px;top:837.9px;letter-spacing:0.055px;color:#111">SV150422</div>
<svg style="position:absolute;left:403px;top:839px" width="15" height="13" viewBox="0 0 15 13"><path d="M7.5 12 C3 8.5 0.8 6.5 0.8 4 C0.8 1.8 2.4 0.8 4 0.8 C5.6 0.8 6.9 1.8 7.5 3 C8.1 1.8 9.4 0.8 11 0.8 C12.6 0.8 14.2 1.8 14.2 4 C14.2 6.5 12 8.5 7.5 12Z" fill="#6e6e6e"/></svg>
<svg style="position:absolute;left:534px;top:844px" width="7" height="4" viewBox="0 0 7 4"><path d="M0.5 0.5 H6.5 L3.5 3.8Z" fill="#000"/></svg>
<svg style="position:absolute;left:1332px;top:844px" width="7" height="4" viewBox="0 0 7 4"><path d="M0.5 0.5 H6.5 L3.5 3.8Z" fill="#000"/></svg>

<div style="position:absolute;left:0;top:857px;width:1435px;height:8px;background:linear-gradient(90deg,#2a5a92 0,#24548e 170px,#2c62a4 800px,#2b66ae 1000px,#1f5396 1200px,#1c4d8c 1420px)"></div>
<div style="position:absolute;left:0;top:857px;width:1435px;height:1px;background:#16345c"></div>
<div style="position:absolute;left:9px;top:859px;width:29px;height:12px;border-radius:14px 14px 0 0;background:radial-gradient(ellipse at 50% 100%,#3f6ea8 0,#7fa6d2 60%,#cfe0f2 100%);border:1px solid #b9cfe8"></div>
<div style="position:absolute;left:68px;top:860px;width:10px;height:8px;border-radius:5px;background:#c6e21c"></div>
<div style="position:absolute;left:80px;top:861px;width:11px;height:8px;border-radius:5px;background:#66b4ee"></div>
<div style="position:absolute;left:139px;top:860px;width:10px;height:6px;background:#8e99a8;transform:skewY(12deg)"></div>
<div style="position:absolute;left:1423px;top:858px;width:12px;height:8px;background:linear-gradient(90deg,#6f93bf,#9ab6d8);border-left:1px solid #1a3a66"></div>
<div style="position:absolute;left:1008px;top:862px;width:8px;height:4px;background:#e2d27a"></div>
<div style="position:absolute;left:1087px;top:862px;width:10px;height:4px;background:#e8dc8a"></div>
<div style="position:absolute;left:1166px;top:862px;width:2px;height:3px;background:#dfe8f4"></div><div style="position:absolute;left:1170px;top:862px;width:2px;height:3px;background:#dfe8f4"></div>
<div style="position:absolute;left:1363px;top:863px;width:30px;height:2px;background:repeating-linear-gradient(90deg,#e8eef8 0,#e8eef8 4px,transparent 4px,transparent 7px)"></div>

<div style="position:absolute;left:180.0px;top:858px;width:57.5px;height:9px;border-radius:3px 3px 0 0;background:linear-gradient(180deg,#b9d2ec,#8db3dc 60%,#7ea8d6);border:1px solid #dbe8f6;box-shadow:0 0 0 1px #1f4170"></div>
<div style="position:absolute;left:198.0px;top:862px;width:22px;height:3px;border-radius:2px 2px 0 0;background:#dfe7f0"></div>
<div style="position:absolute;left:241.8px;top:858px;width:57.5px;height:9px;border-radius:3px 3px 0 0;background:linear-gradient(180deg,#b9d2ec,#8db3dc 60%,#7ea8d6);border:1px solid #dbe8f6;box-shadow:0 0 0 1px #1f4170"></div>
<div style="position:absolute;left:264.8px;top:862px;width:12px;height:3px;border-radius:2px 2px 0 0;background:#e09a3e"></div>
<div style="position:absolute;left:303.6px;top:858px;width:57.5px;height:9px;border-radius:3px 3px 0 0;background:linear-gradient(180deg,#b9d2ec,#8db3dc 60%,#7ea8d6);border:1px solid #dbe8f6;box-shadow:0 0 0 1px #1f4170"></div>
<div style="position:absolute;left:365.4px;top:858px;width:57.5px;height:9px;border-radius:3px 3px 0 0;background:linear-gradient(180deg,#b9d2ec,#8db3dc 60%,#7ea8d6);border:1px solid #dbe8f6;box-shadow:0 0 0 1px #1f4170"></div>
<div style="position:absolute;left:378.4px;top:860px;width:32px;height:5px;border-radius:2px 2px 0 0;background:#3eaaea"></div>
<div style="position:absolute;left:427.2px;top:858px;width:57.5px;height:9px;border-radius:3px 3px 0 0;background:linear-gradient(180deg,#b9d2ec,#8db3dc 60%,#7ea8d6);border:1px solid #dbe8f6;box-shadow:0 0 0 1px #1f4170"></div>
<div style="position:absolute;left:441.2px;top:860px;width:30px;height:5px;border-radius:2px 2px 0 0;background:#e88a2e"></div>
<div style="position:absolute;left:489.0px;top:858px;width:57.5px;height:9px;border-radius:3px 3px 0 0;background:linear-gradient(180deg,#b9d2ec,#8db3dc 60%,#7ea8d6);border:1px solid #dbe8f6;box-shadow:0 0 0 1px #1f4170"></div>
<div style="position:absolute;left:503.0px;top:860px;width:30px;height:5px;border-radius:2px 2px 0 0;background:#e88a2e"></div>
<div style="position:absolute;left:550.8px;top:858px;width:57.5px;height:9px;border-radius:3px 3px 0 0;background:linear-gradient(180deg,#b9d2ec,#8db3dc 60%,#7ea8d6);border:1px solid #dbe8f6;box-shadow:0 0 0 1px #1f4170"></div>
<div style="position:absolute;left:569.8px;top:859px;width:20px;height:6px;border-radius:2px 2px 0 0;background:#f2f4f8"></div>
<div style="position:absolute;left:612.6px;top:858px;width:57.5px;height:9px;border-radius:3px 3px 0 0;background:linear-gradient(180deg,#b9d2ec,#8db3dc 60%,#7ea8d6);border:1px solid #dbe8f6;box-shadow:0 0 0 1px #1f4170"></div>
<div style="position:absolute;left:635.6px;top:861px;width:12px;height:4px;border-radius:2px 2px 0 0;background:#7a3fb0"></div>
<div style="position:absolute;left:674.4px;top:858px;width:57.5px;height:9px;border-radius:3px 3px 0 0;background:linear-gradient(180deg,#b9d2ec,#8db3dc 60%,#7ea8d6);border:1px solid #dbe8f6;box-shadow:0 0 0 1px #1f4170"></div>
<div style="position:absolute;left:694.4px;top:859px;width:18px;height:6px;border-radius:2px 2px 0 0;background:#2a2a2e"></div>
<div style="position:absolute;left:736.2px;top:858px;width:57.5px;height:9px;border-radius:3px 3px 0 0;background:linear-gradient(180deg,#f0f5fb,#d8e4f2);border:1px solid #dbe8f6;box-shadow:0 0 0 1px #1f4170"></div>
<div style="position:absolute;left:761.2px;top:859px;width:8px;height:6px;border-radius:2px 2px 0 0;background:#e8c860"></div>
</body></html>
